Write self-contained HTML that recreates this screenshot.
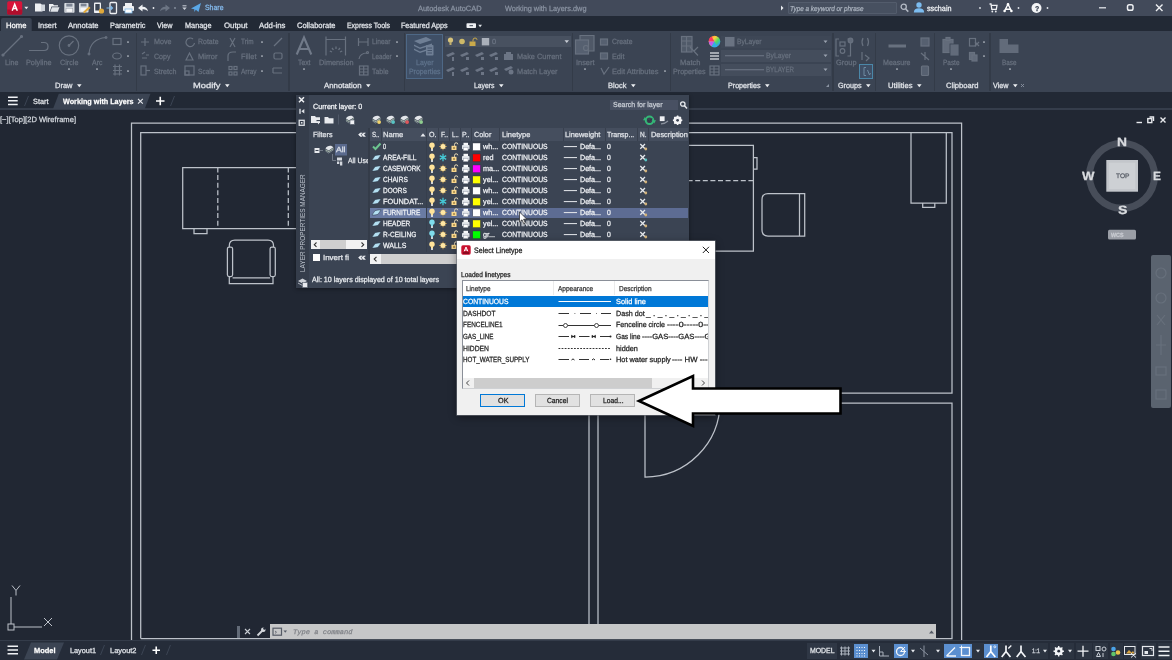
<!DOCTYPE html>
<html><head><meta charset="utf-8"><title>Autodesk AutoCAD - Working with Layers.dwg</title>
<style>
html,body{margin:0;padding:0;background:#212733;}
body{width:1172px;height:660px;position:relative;overflow:hidden;font-family:"Liberation Sans",sans-serif;}
#root{position:absolute;left:0;top:0;width:1172px;height:660px;overflow:hidden;background:#212733;filter:blur(0.5px);}
span{display:block}
svg.t{position:absolute;overflow:visible}
text{font-family:"Liberation Sans",sans-serif;text-rendering:geometricPrecision;white-space:pre}
</style></head><body><div id="root">
<svg style="position:absolute;left:0.0px;top:0.0px;" width="1172" height="660" viewBox="0 0 1172 660">
<g stroke="#bdc2ca" stroke-width="1.25" fill="none">
<path d="M131.5 640V123H961.6V640"/>
<path d="M140.7 638.6V132.7H952V393H600M600 403H952V638.6H140.7"/>
<path d="M589 287V638.6M598 287V638.6"/>
<path d="M645 402V477A75 75 0 0 0 720 402"/>
<!-- desk 1 -->
<path d="M300 167.5H182.7V228.5H300"/>
<path d="M217.8 167.5V228.5M288.3 167.5V228.5" stroke-dasharray="5 2.6"/>
<path d="M194 228.5V233.7H207V228.5"/>
<!-- chair 1 -->
<path d="M229.300 247V245.500Q229.300 240 234.800 240H268Q273.500 240 273.500 245.500V247"/>
<rect x="227.400" y="247" width="5.200" height="29.500" rx="1.800"/>
<rect x="270.100" y="247" width="5.200" height="29.500" rx="1.800"/>
<path d="M232.600 277.900H270.100M229.300 276.500V283.500H273V276.500"/>
<!-- desk 2 -->
<path d="M680 145.4H753.4V251H680"/>
<path d="M680 180.5H753.4" stroke-dasharray="5 2.6"/>
<path d="M753.4 157.5H757V169H753.4"/>
<!-- chair 2 -->
<path d="M804.7 193.5H768Q762 193.5 762 199.5V230Q762 236 768 236H804.7Z"/>
<path d="M799.5 193.5V236"/>
<!-- cabinet -->
<path d="M911 132.7V203H946.3V132.7"/>
<path d="M922.7 203V207.3H934.8V203"/>
</g></svg>
<svg style="position:absolute;left:0.0px;top:580.0px;" width="60" height="60" viewBox="0 0 60 60"><g stroke="#bdc2ca" stroke-width="1" fill="none"><path d="M11 17V44M14 47H42"/><rect x="8" y="44" width="6" height="6"/><path d="M12 5.5L16 10.5L20 5.5M16 10.5V15.5M44 38L52 46M52 38L44 46"/></g></svg>
<svg class="t" style="left:0.0px;top:122px;" width="1" height="1"><text x="0" y="0" font-size="7.6" fill="#d5d9df" textLength="76.0" lengthAdjust="spacingAndGlyphs" stroke="#d5d9df" stroke-width="0.25">[−][Top][2D Wireframe]</text></svg>
<svg style="position:absolute;left:1080.0px;top:132.0px;" width="90" height="115" viewBox="0 0 90 115">
<circle cx="42" cy="43.7" r="32.5" fill="none" stroke="#474d59" stroke-width="7"/>
<rect x="26.3" y="28" width="31.7" height="31.7" fill="#c3c6cb"/>
<rect x="29" y="30.7" width="26.3" height="26.3" fill="#cdd0d4"/>
<rect x="28" y="97.8" width="28" height="9.7" rx="1.5" fill="#9a9ea6"/>
</svg>
<svg class="t" style="left:1115.5px;top:178px;" width="1" height="1"><text x="0" y="0" font-size="6.5" fill="#5b606a" textLength="13.5" lengthAdjust="spacingAndGlyphs" stroke="#5b606a" stroke-width="0.25">TOP</text></svg>
<svg class="t" style="left:1117.0px;top:146px;" width="1" height="1"><text x="0" y="0" font-size="12" fill="#d9dbdf" font-weight="bold" textLength="10.0" lengthAdjust="spacingAndGlyphs" stroke="#d9dbdf" stroke-width="0.25">N</text></svg>
<svg class="t" style="left:1117.5px;top:214px;" width="1" height="1"><text x="0" y="0" font-size="12" fill="#d9dbdf" font-weight="bold" textLength="9.5" lengthAdjust="spacingAndGlyphs" stroke="#d9dbdf" stroke-width="0.25">S</text></svg>
<svg class="t" style="left:1081.5px;top:180px;" width="1" height="1"><text x="0" y="0" font-size="12" fill="#d9dbdf" font-weight="bold" textLength="12.5" lengthAdjust="spacingAndGlyphs" stroke="#d9dbdf" stroke-width="0.25">W</text></svg>
<svg class="t" style="left:1153.0px;top:180px;" width="1" height="1"><text x="0" y="0" font-size="12" fill="#d9dbdf" font-weight="bold" textLength="8.0" lengthAdjust="spacingAndGlyphs" stroke="#d9dbdf" stroke-width="0.25">E</text></svg>
<svg class="t" style="left:1110.5px;top:237px;" width="1" height="1"><text x="0" y="0" font-size="6" fill="#c8cbd1" font-weight="bold" textLength="12.5" lengthAdjust="spacingAndGlyphs" stroke="#c8cbd1" stroke-width="0.25">WCS</text></svg>
<svg style="position:absolute;left:1134.0px;top:114.0px;" width="36" height="12" viewBox="0 0 36 12"><g stroke="#e8eaee" stroke-width="1.4" fill="none"><path d="M2.5 8.5H8"/><rect x="13.8" y="4.6" width="4" height="4"/><path d="M15.5 3H19.5V7"/><path d="M26.5 3.5L31.5 8.5M31.5 3.5L26.5 8.5"/></g></svg>
<div style="position:absolute;left:1150.8px;top:255.0px;width:20.0px;height:153.0px;background:#5a636f;border-radius:2px;"></div>
<svg style="position:absolute;left:1151.0px;top:255.0px;" width="20" height="153" viewBox="0 0 20 153"><g stroke="#67707c" stroke-width="1.200" fill="none"><circle cx="10" cy="18" r="5"/><circle cx="10" cy="43" r="5"/><path d="M6 60L14 70M14 60L6 70M10 80V100M5 90H15"/><rect x="5" y="112" width="10" height="8"/><rect x="5" y="135" width="10" height="9"/></g></svg>
<div style="position:absolute;left:0.0px;top:0.0px;width:1172.0px;height:16.3px;background:#424a5a;"></div>
<div style="position:absolute;left:0.0px;top:16.3px;width:1172.0px;height:15.0px;background:#222935;"></div>
<div style="position:absolute;left:0.0px;top:31.0px;width:1172.0px;height:61.3px;background:#3b4453;"></div>
<div style="position:absolute;left:0.0px;top:92.3px;width:1172.0px;height:17.0px;background:#222935;"></div>
<div style="position:absolute;left:0.0px;top:108.3px;width:1172.0px;height:2.2px;background:#353d4b;"></div>
<svg style="position:absolute;left:5.0px;top:0.0px;" width="26" height="16" viewBox="0 0 26 16"><rect x="2.200" y="1.300" width="15" height="13.200" rx="1.600" fill="#d8143a"/><path d="M2.200 9.500H17.200V12.900Q17.200 14.500 15.600 14.500H3.800Q2.200 14.500 2.200 12.900Z" fill="#b00e2c"/><path d="M7.200 10.700L9.700 4.300L12.300 10.700M8.100 8.600H11.400" stroke="#fff" stroke-width="1.500" fill="none"/><path d="M19.300 6.700H23.300L21.300 9.300Z" fill="#e8eaee"/></svg>
<svg style="position:absolute;left:34.0px;top:0.0px;" width="170" height="16" viewBox="0 0 170 16"><g fill="#eef0f3">
<path d="M1 3.500H6.500L8.500 5.500V11.500H1Z"/><rect x="7" y="4.500" width="4" height="6.500" fill="#cfd4db"/>
<path d="M15 4H19L20 5.200H24V6.500H17.500L15.800 11.500H15Z"/><path d="M18 7.200H25.500L23.800 11.800H16.300Z" fill="#dfe3e8"/>
<rect x="30.300" y="3" width="10.200" height="9.800" rx=".8" fill="#d9dde2"/><rect x="32.300" y="3.600" width="6.200" height="3" fill="#7d8594"/><rect x="32" y="8.200" width="6.800" height="4" fill="#f4f5f7" stroke="#8a919d" stroke-width=".5"/>
<rect x="45" y="3" width="9.500" height="9.500" rx=".8" fill="#d9dde2"/><rect x="46.700" y="3.600" width="5.800" height="2.800" fill="#7d8594"/><rect x="46.500" y="8" width="6" height="3.500" fill="#f4f5f7"/><path d="M49 12L55 6.500L56.500 8L50.500 13.200Z" fill="#e0a93b"/>
<rect x="60" y="2.500" width="7" height="10.500" rx=".8"/><rect x="61.300" y="4" width="4.400" height="6.500" fill="#3b4453"/><circle cx="67.500" cy="11" r="2.600" fill="#e0a93b"/>
<rect x="76" y="2.500" width="6.500" height="11" rx="1" fill="none" stroke="#eef0f3" stroke-width="1.300"/><path d="M72.500 8H78M76.500 6L78.500 8L76.500 10" stroke="#7fb8e8" stroke-width="1.200" fill="none"/>
<rect x="89" y="6" width="11" height="5" rx="1"/><rect x="91" y="3" width="7" height="3.500"/><rect x="91" y="9" width="7" height="4" fill="#fff" stroke="#7fb8e8" stroke-width=".8"/>
<path d="M104 8L108.500 4.500V6.700Q113 6.500 114 11.200Q111.500 8.800 108.500 9.300V11.500Z"/>
<circle cx="119.500" cy="8" r=".9"/>
<path d="M136 8L131.500 4.500V6.700Q127 6.500 126 11.200Q128.500 8.800 131.500 9.300V11.500Z" fill="#6b7483"/>
<circle cx="141" cy="8" r=".9" fill="#8a93a1"/>
<path d="M148.300 7.500H152.700L150.500 10Z" fill="#c9ced6"/><rect x="148.500" y="5.300" width="4" height="1" fill="#c9ced6"/>
<path d="M157 8.500L167 3L164.500 12L161.800 9.800L160.300 12V9.300Z" fill="#5aa7e6"/>
</g></svg>
<svg class="t" style="left:205.0px;top:10px;" width="1" height="1"><text x="0" y="0" font-size="7.6" fill="#86bcef" textLength="18.5" lengthAdjust="spacingAndGlyphs" stroke="#86bcef" stroke-width="0.25">Share</text></svg>
<svg class="t" style="left:418.0px;top:11px;" width="1" height="1"><text x="0" y="0" font-size="7.6" fill="#8a93a2" textLength="63.5" lengthAdjust="spacingAndGlyphs" stroke="#8a93a2" stroke-width="0.25">Autodesk AutoCAD</text></svg>
<svg class="t" style="left:505.0px;top:11px;" width="1" height="1"><text x="0" y="0" font-size="7.6" fill="#8a93a2" textLength="81.5" lengthAdjust="spacingAndGlyphs" stroke="#8a93a2" stroke-width="0.25">Working with Layers.dwg</text></svg>
<svg style="position:absolute;left:778.0px;top:2.0px;" width="8" height="12" viewBox="0 0 8 12"><path d="M3 3.500L5.500 6L3 8.500Z" fill="#e8eaee"/></svg>
<div style="position:absolute;left:787.5px;top:1.5px;width:109.5px;height:12.8px;background:#475060;box-sizing:border-box;border:1px solid #535c6c;border-radius:1px;"></div>
<svg class="t" style="left:790.0px;top:11px;" width="1" height="1"><text x="0" y="0" font-size="7.2" fill="#a9b1bd" font-style="italic" textLength="73.5" lengthAdjust="spacingAndGlyphs" stroke="#a9b1bd" stroke-width="0.25">Type a keyword or phrase</text></svg>
<svg style="position:absolute;left:898.0px;top:0.0px;" width="274" height="16" viewBox="0 0 274 16"><circle cx="5.700" cy="6.800" r="2.600" fill="none" stroke="#b4bac5" stroke-width="1.300"/><path d="M7.700 9L10.300 11.600" stroke="#b4bac5" stroke-width="1.500"/>
<circle cx="21" cy="5" r="2.700" fill="#7cbcf0"/><path d="M15.800 12.500Q16 8.300 21 8.300Q26 8.300 26.200 12.500Z" fill="#7cbcf0"/>
<circle cx="82" cy="8" r=".9" fill="#dfe3e8"/>
<path d="M91.500 4H93L93.800 9.300H98.300L99 5.300H93.300" stroke="#eef0f3" stroke-width="1.300" fill="none"/><circle cx="94.300" cy="11.500" r=".9" fill="#eef0f3"/><circle cx="97.800" cy="11.500" r=".9" fill="#eef0f3"/>
<path d="M106.500 11L110 4.300L113.500 11M107.500 9.300H112.500" stroke="#fff" stroke-width="1.400" fill="none"/><circle cx="110" cy="4.400" r="1.300" fill="#fff"/><circle cx="106.600" cy="11" r="1.300" fill="#fff"/><circle cx="113.400" cy="11" r="1.300" fill="#fff"/>
<circle cx="120.500" cy="8" r=".9" fill="#dfe3e8"/>
<circle cx="138.500" cy="8" r="5" fill="#f4f5f7"/>
<circle cx="149.500" cy="8" r=".9" fill="#dfe3e8"/>
<path d="M201 7.800H208" stroke="#dfe3e8" stroke-width="1.300"/>
<rect x="229.500" y="4.800" width="5.500" height="5.500" rx="1.800" fill="none" stroke="#eef0f3" stroke-width="1.500"/>
<path d="M258 4.500L264.500 11M264.500 4.500L258 11" stroke="#eef0f3" stroke-width="1.400"/></svg>
<svg class="t" style="left:1035.2px;top:11px;" width="1" height="1"><text x="0" y="0" font-size="7" fill="#3b4453" font-weight="bold" stroke="#3b4453" stroke-width="0.25">?</text></svg>
<svg class="t" style="left:927.0px;top:11px;" width="1" height="1"><text x="0" y="0" font-size="7.8" fill="#f2f4f7" textLength="24.5" lengthAdjust="spacingAndGlyphs" stroke="#f2f4f7" stroke-width="0.25">sschain</text></svg>
<svg style="position:absolute;left:0.0px;top:16.0px;" width="40" height="16" viewBox="0 0 40 16"><path d="M1 15.300V3.800Q1 2 2.800 2H29.900Q31.700 2 31.700 3.800V15.300Z" fill="#3b4453"/></svg>
<svg class="t" style="left:6.0px;top:28px;" width="1" height="1"><text x="0" y="0" font-size="7.8" fill="#fff" textLength="20.5" lengthAdjust="spacingAndGlyphs" stroke="#fff" stroke-width="0.25">Home</text></svg>
<svg class="t" style="left:38.0px;top:28px;" width="1" height="1"><text x="0" y="0" font-size="7.8" fill="#e4e7ec" textLength="18.5" lengthAdjust="spacingAndGlyphs" stroke="#e4e7ec" stroke-width="0.25">Insert</text></svg>
<svg class="t" style="left:68.0px;top:28px;" width="1" height="1"><text x="0" y="0" font-size="7.8" fill="#e4e7ec" textLength="30.5" lengthAdjust="spacingAndGlyphs" stroke="#e4e7ec" stroke-width="0.25">Annotate</text></svg>
<svg class="t" style="left:110.0px;top:28px;" width="1" height="1"><text x="0" y="0" font-size="7.8" fill="#e4e7ec" textLength="35.5" lengthAdjust="spacingAndGlyphs" stroke="#e4e7ec" stroke-width="0.25">Parametric</text></svg>
<svg class="t" style="left:157.0px;top:28px;" width="1" height="1"><text x="0" y="0" font-size="7.8" fill="#e4e7ec" textLength="15.5" lengthAdjust="spacingAndGlyphs" stroke="#e4e7ec" stroke-width="0.25">View</text></svg>
<svg class="t" style="left:185.0px;top:28px;" width="1" height="1"><text x="0" y="0" font-size="7.8" fill="#e4e7ec" textLength="26.5" lengthAdjust="spacingAndGlyphs" stroke="#e4e7ec" stroke-width="0.25">Manage</text></svg>
<svg class="t" style="left:224.0px;top:28px;" width="1" height="1"><text x="0" y="0" font-size="7.8" fill="#e4e7ec" textLength="23.5" lengthAdjust="spacingAndGlyphs" stroke="#e4e7ec" stroke-width="0.25">Output</text></svg>
<svg class="t" style="left:259.0px;top:28px;" width="1" height="1"><text x="0" y="0" font-size="7.8" fill="#e4e7ec" textLength="26.5" lengthAdjust="spacingAndGlyphs" stroke="#e4e7ec" stroke-width="0.25">Add-ins</text></svg>
<svg class="t" style="left:297.0px;top:28px;" width="1" height="1"><text x="0" y="0" font-size="7.8" fill="#e4e7ec" textLength="38.5" lengthAdjust="spacingAndGlyphs" stroke="#e4e7ec" stroke-width="0.25">Collaborate</text></svg>
<svg class="t" style="left:346.5px;top:28px;" width="1" height="1"><text x="0" y="0" font-size="7.8" fill="#e4e7ec" textLength="43.0" lengthAdjust="spacingAndGlyphs" stroke="#e4e7ec" stroke-width="0.25">Express Tools</text></svg>
<svg class="t" style="left:401.0px;top:28px;" width="1" height="1"><text x="0" y="0" font-size="7.8" fill="#e4e7ec" textLength="46.5" lengthAdjust="spacingAndGlyphs" stroke="#e4e7ec" stroke-width="0.25">Featured Apps</text></svg>
<svg style="position:absolute;left:464.0px;top:19.0px;" width="24" height="12" viewBox="0 0 24 12"><rect x="2.500" y="4.300" width="9.500" height="4.800" rx=".8" fill="#eef0f3"/><path d="M5.500 6.700H9" stroke="#3b4453" stroke-width="1"/><path d="M14.300 5.800H18L16.150 8.200Z" fill="#dfe3e8"/></svg>
<div style="position:absolute;left:135.7px;top:33.0px;width:1.2px;height:57.5px;background:#333b48;"></div>
<div style="position:absolute;left:288.4px;top:33.0px;width:1.2px;height:57.5px;background:#333b48;"></div>
<div style="position:absolute;left:403.7px;top:33.0px;width:1.2px;height:57.5px;background:#333b48;"></div>
<div style="position:absolute;left:571.5px;top:33.0px;width:1.2px;height:57.5px;background:#333b48;"></div>
<div style="position:absolute;left:669.6px;top:33.0px;width:1.2px;height:57.5px;background:#333b48;"></div>
<div style="position:absolute;left:832.4px;top:33.0px;width:1.2px;height:57.5px;background:#333b48;"></div>
<div style="position:absolute;left:874.7px;top:33.0px;width:1.2px;height:57.5px;background:#333b48;"></div>
<div style="position:absolute;left:934.0px;top:33.0px;width:1.2px;height:57.5px;background:#333b48;"></div>
<div style="position:absolute;left:989.4px;top:33.0px;width:1.2px;height:57.5px;background:#333b48;"></div>
<svg class="t" style="left:55.0px;top:88px;" width="1" height="1"><text x="0" y="0" font-size="7.6" fill="#e4e7ec" textLength="17.5" lengthAdjust="spacingAndGlyphs" stroke="#e4e7ec" stroke-width="0.25">Draw</text></svg>
<svg style="position:absolute;left:75.8px;top:82.7px;" width="8" height="6" viewBox="0 0 8 6"><path d="M1 1.300H5.600L3.300 4.300Z" fill="#eef0f3"/></svg>
<svg class="t" style="left:193.0px;top:88px;" width="1" height="1"><text x="0" y="0" font-size="7.6" fill="#e4e7ec" textLength="27.5" lengthAdjust="spacingAndGlyphs" stroke="#e4e7ec" stroke-width="0.25">Modify</text></svg>
<svg style="position:absolute;left:223.8px;top:82.7px;" width="8" height="6" viewBox="0 0 8 6"><path d="M1 1.300H5.600L3.300 4.300Z" fill="#eef0f3"/></svg>
<svg class="t" style="left:324.0px;top:88px;" width="1" height="1"><text x="0" y="0" font-size="7.6" fill="#e4e7ec" textLength="37.5" lengthAdjust="spacingAndGlyphs" stroke="#e4e7ec" stroke-width="0.25">Annotation</text></svg>
<svg style="position:absolute;left:364.8px;top:82.7px;" width="8" height="6" viewBox="0 0 8 6"><path d="M1 1.300H5.600L3.300 4.300Z" fill="#eef0f3"/></svg>
<svg class="t" style="left:474.0px;top:88px;" width="1" height="1"><text x="0" y="0" font-size="7.6" fill="#e4e7ec" textLength="20.5" lengthAdjust="spacingAndGlyphs" stroke="#e4e7ec" stroke-width="0.25">Layers</text></svg>
<svg style="position:absolute;left:497.8px;top:82.7px;" width="8" height="6" viewBox="0 0 8 6"><path d="M1 1.300H5.600L3.300 4.300Z" fill="#eef0f3"/></svg>
<svg class="t" style="left:608.0px;top:88px;" width="1" height="1"><text x="0" y="0" font-size="7.6" fill="#e4e7ec" textLength="18.5" lengthAdjust="spacingAndGlyphs" stroke="#e4e7ec" stroke-width="0.25">Block</text></svg>
<svg style="position:absolute;left:629.8px;top:82.7px;" width="8" height="6" viewBox="0 0 8 6"><path d="M1 1.300H5.600L3.300 4.300Z" fill="#eef0f3"/></svg>
<svg class="t" style="left:728.0px;top:88px;" width="1" height="1"><text x="0" y="0" font-size="7.6" fill="#e4e7ec" textLength="32.5" lengthAdjust="spacingAndGlyphs" stroke="#e4e7ec" stroke-width="0.25">Properties</text></svg>
<svg style="position:absolute;left:763.8px;top:82.7px;" width="8" height="6" viewBox="0 0 8 6"><path d="M1 1.300H5.600L3.300 4.300Z" fill="#eef0f3"/></svg>
<svg class="t" style="left:838.0px;top:88px;" width="1" height="1"><text x="0" y="0" font-size="7.6" fill="#e4e7ec" textLength="23.5" lengthAdjust="spacingAndGlyphs" stroke="#e4e7ec" stroke-width="0.25">Groups</text></svg>
<svg style="position:absolute;left:864.8px;top:82.7px;" width="8" height="6" viewBox="0 0 8 6"><path d="M1 1.300H5.600L3.300 4.300Z" fill="#eef0f3"/></svg>
<svg class="t" style="left:888.0px;top:88px;" width="1" height="1"><text x="0" y="0" font-size="7.6" fill="#e4e7ec" textLength="24.5" lengthAdjust="spacingAndGlyphs" stroke="#e4e7ec" stroke-width="0.25">Utilities</text></svg>
<svg style="position:absolute;left:915.8px;top:82.7px;" width="8" height="6" viewBox="0 0 8 6"><path d="M1 1.300H5.600L3.300 4.300Z" fill="#eef0f3"/></svg>
<svg class="t" style="left:946.0px;top:88px;" width="1" height="1"><text x="0" y="0" font-size="7.6" fill="#e4e7ec" textLength="32.5" lengthAdjust="spacingAndGlyphs" stroke="#e4e7ec" stroke-width="0.25">Clipboard</text></svg>
<svg class="t" style="left:993.0px;top:88px;" width="1" height="1"><text x="0" y="0" font-size="7.6" fill="#e4e7ec" textLength="15.5" lengthAdjust="spacingAndGlyphs" stroke="#e4e7ec" stroke-width="0.25">View</text></svg>
<svg style="position:absolute;left:1011.8px;top:82.7px;" width="8" height="6" viewBox="0 0 8 6"><path d="M1 1.300H5.600L3.300 4.300Z" fill="#eef0f3"/></svg>
<svg style="position:absolute;left:1019.0px;top:82.0px;" width="8" height="7" viewBox="0 0 8 7"><path d="M2 2L5 5M5 2L2 5" stroke="#8a93a1" stroke-width=".9"/></svg>
<svg style="position:absolute;left:824.0px;top:82.0px;" width="8" height="7" viewBox="0 0 8 7"><path d="M5 2L2 5H5Z" fill="#8a93a1"/></svg>
<svg style="position:absolute;left:0.0px;top:0.0px;" width="1172" height="92" viewBox="0 0 1172 92"><g stroke="#68717f" stroke-width="1.200" fill="none"><path d="M3 55L21.500 36.500"/><circle cx="3" cy="55" r="1" fill="#626b7a"/><circle cx="21.500" cy="36.500" r="1" fill="#626b7a"/><path d="M29 50.500H44Q48 50.500 48 46.500Q48 42.500 44 42.500H41"/><circle cx="69" cy="45.500" r="9.700"/><path d="M69 45.500L73.500 41"/><circle cx="69" cy="45.500" r=".8"/><path d="M89 54Q90 39 106 37.500"/><circle cx="89" cy="54" r=".9"/><circle cx="106" cy="37.500" r=".9"/><rect x="113" y="38.500" width="8" height="6"/><ellipse cx="117" cy="56" rx="4.300" ry="3"/><path d="M113 66.500H122M113 70.500H122M113 74H122M115 64.500V75.500M119.500 64.500V75.500"/><path d="M145 38V46M141 42H149"/><path d="M142 54L145 52M142 58H147M146 55H149"/><rect x="141" y="66" width="5" height="9"/><path d="M146 70.500H150"/><path d="M193 39A4.300 4.300 0 1 0 194.500 43"/><path d="M186 60L189.500 53L193 60Z"/><rect x="185" y="66" width="9" height="9"/><rect x="185" y="71" width="4" height="4"/><path d="M230 38L235 47M235 38L230 47"/><path d="M228 61V56Q228 52 233 52H236"/><rect x="229" y="66.500" width="3" height="3"/><rect x="234" y="66.500" width="3" height="3"/><rect x="229" y="72" width="3" height="3"/><rect x="234" y="72" width="3" height="3"/><path d="M274 46L282 38"/><rect x="274" y="53" width="8" height="6" rx="1.500"/><path d="M273 68H282M273 73H282M273 68V73"/><path d="M296.700 54.500L304 37.500L311.300 54.500M299.500 49H308.500" stroke="#717a89" stroke-width="2.100"/><path d="M326 36.500V55.500M345.500 36.500V55.500M326 39.500H345.500"/><path d="M332 52L329.800 51M333.500 49.800L332 48M336 49V46.500M338.500 49.800L340 48M340 52L342.200 51" stroke-width="1.300"/><path d="M358.500 38V46M368 38V46M358.500 42H368"/><path d="M359 59Q360 53 367 53"/><circle cx="367.500" cy="52.500" r="1"/><rect x="359.500" y="66" width="8.500" height="9"/><path d="M359.500 69H368M359.500 72H368M363.700 66V75"/><path d="M580 40V35.500H594V51H588.500" fill="#4f5867"/><rect x="575.500" y="40" width="13" height="14" fill="#566070"/><circle cx="586" cy="48" r="2.500"/><rect x="600.500" y="39" width="7" height="6" fill="#566070"/><rect x="600.500" y="53" width="7" height="6" fill="#566070"/><path d="M601 68L604 74L609 67"/><rect x="681.500" y="36.500" width="10.500" height="15.500" fill="#505a69"/><path d="M681.500 41H692M681.500 46H692M686.500 36.500V52M690 47L698 55.500M698 47L694 51" /><path d="M710 53H719M710 56H719M710 59H719" stroke="#c3c8d0" stroke-width="1.400"/><rect x="710" y="66" width="9" height="9"/><path d="M710 69H719M710 72H719M714 66V75"/><path d="M839 39H836V56H839M847.500 39H850.500V56H847.500"/><rect x="840" y="42" width="5" height="4"/><circle cx="842.500" cy="51" r="2.300"/><circle cx="850.500" cy="40.500" r="2.300" fill="#626b7a"/><path d="M863 38Q861 42 863 46M867.500 38Q869.500 42 867.500 46"/><path d="M862 52V60M865 55L869 58L866 61"/><path d="M888.500 46H906" stroke-width="3"/><rect x="921" y="38" width="8" height="8" fill="#566070"/><path d="M921 53L929 60M925 52V60"/><rect x="921.500" y="66" width="7" height="9.500" rx="1" fill="#566070"/><rect x="943" y="39.500" width="10" height="13" fill="#626b7a"/><rect x="946" y="37.500" width="4" height="3" fill="#626b7a"/><rect x="950" y="44" width="9" height="12" fill="#626b7a" stroke="#3b4453" stroke-width=".8"/><rect x="969.500" y="38.500" width="6" height="7.500"/><path d="M975 42L979 46M979 42L975 46"/><rect x="969.500" y="52.500" width="5" height="7" fill="#626b7a"/><rect x="972" y="55" width="5" height="6" fill="#626b7a"/><path d="M999.500 39H1008V44.500H1018.500V53H999.500Z" fill="#626b7a" stroke="none"/></g></svg>
<svg style="position:absolute;left:126.0px;top:39.7px;" width="4" height="4" viewBox="0 0 4 4"><circle cx="2" cy="2" r=".85" fill="#c3c9d2"/></svg>
<svg style="position:absolute;left:126.0px;top:54.2px;" width="4" height="4" viewBox="0 0 4 4"><circle cx="2" cy="2" r=".85" fill="#c3c9d2"/></svg>
<svg style="position:absolute;left:126.0px;top:68.8px;" width="4" height="4" viewBox="0 0 4 4"><circle cx="2" cy="2" r=".85" fill="#c3c9d2"/></svg>
<svg style="position:absolute;left:67.0px;top:67.0px;" width="4" height="4" viewBox="0 0 4 4"><circle cx="2" cy="2" r=".85" fill="#c3c9d2"/></svg>
<svg style="position:absolute;left:95.0px;top:67.0px;" width="4" height="4" viewBox="0 0 4 4"><circle cx="2" cy="2" r=".85" fill="#c3c9d2"/></svg>
<svg style="position:absolute;left:260.0px;top:39.7px;" width="4" height="4" viewBox="0 0 4 4"><circle cx="2" cy="2" r=".85" fill="#c3c9d2"/></svg>
<svg style="position:absolute;left:260.0px;top:54.2px;" width="4" height="4" viewBox="0 0 4 4"><circle cx="2" cy="2" r=".85" fill="#c3c9d2"/></svg>
<svg style="position:absolute;left:260.0px;top:68.8px;" width="4" height="4" viewBox="0 0 4 4"><circle cx="2" cy="2" r=".85" fill="#c3c9d2"/></svg>
<svg style="position:absolute;left:302.0px;top:67.0px;" width="4" height="4" viewBox="0 0 4 4"><circle cx="2" cy="2" r=".85" fill="#c3c9d2"/></svg>
<svg style="position:absolute;left:395.0px;top:39.7px;" width="4" height="4" viewBox="0 0 4 4"><circle cx="2" cy="2" r=".85" fill="#c3c9d2"/></svg>
<svg style="position:absolute;left:395.0px;top:54.2px;" width="4" height="4" viewBox="0 0 4 4"><circle cx="2" cy="2" r=".85" fill="#c3c9d2"/></svg>
<svg style="position:absolute;left:583.0px;top:67.0px;" width="4" height="4" viewBox="0 0 4 4"><circle cx="2" cy="2" r=".85" fill="#c3c9d2"/></svg>
<svg style="position:absolute;left:663.0px;top:68.8px;" width="4" height="4" viewBox="0 0 4 4"><circle cx="2" cy="2" r=".85" fill="#c3c9d2"/></svg>
<svg style="position:absolute;left:895.0px;top:67.0px;" width="4" height="4" viewBox="0 0 4 4"><circle cx="2" cy="2" r=".85" fill="#c3c9d2"/></svg>
<svg style="position:absolute;left:949.0px;top:67.0px;" width="4" height="4" viewBox="0 0 4 4"><circle cx="2" cy="2" r=".85" fill="#c3c9d2"/></svg>
<svg style="position:absolute;left:982.0px;top:39.7px;" width="4" height="4" viewBox="0 0 4 4"><circle cx="2" cy="2" r=".85" fill="#c3c9d2"/></svg>
<svg style="position:absolute;left:982.0px;top:54.2px;" width="4" height="4" viewBox="0 0 4 4"><circle cx="2" cy="2" r=".85" fill="#c3c9d2"/></svg>
<svg style="position:absolute;left:1008.0px;top:67.0px;" width="4" height="4" viewBox="0 0 4 4"><circle cx="2" cy="2" r=".85" fill="#c3c9d2"/></svg>
<svg class="t" style="left:5.0px;top:65px;" width="1" height="1"><text x="0" y="0" font-size="7.6" fill="#68717f" textLength="13.5" lengthAdjust="spacingAndGlyphs" stroke="#68717f" stroke-width="0.25">Line</text></svg>
<svg class="t" style="left:26.0px;top:65px;" width="1" height="1"><text x="0" y="0" font-size="7.6" fill="#68717f" textLength="25.5" lengthAdjust="spacingAndGlyphs" stroke="#68717f" stroke-width="0.25">Polyline</text></svg>
<svg class="t" style="left:60.0px;top:65px;" width="1" height="1"><text x="0" y="0" font-size="7.6" fill="#68717f" textLength="18.5" lengthAdjust="spacingAndGlyphs" stroke="#68717f" stroke-width="0.25">Circle</text></svg>
<svg class="t" style="left:92.0px;top:65px;" width="1" height="1"><text x="0" y="0" font-size="7.6" fill="#68717f" textLength="10.5" lengthAdjust="spacingAndGlyphs" stroke="#68717f" stroke-width="0.25">Arc</text></svg>
<svg class="t" style="left:154.0px;top:44px;" width="1" height="1"><text x="0" y="0" font-size="7.6" fill="#68717f" textLength="17.5" lengthAdjust="spacingAndGlyphs" stroke="#68717f" stroke-width="0.25">Move</text></svg>
<svg class="t" style="left:154.0px;top:59px;" width="1" height="1"><text x="0" y="0" font-size="7.6" fill="#68717f" textLength="16.5" lengthAdjust="spacingAndGlyphs" stroke="#68717f" stroke-width="0.25">Copy</text></svg>
<svg class="t" style="left:154.0px;top:74px;" width="1" height="1"><text x="0" y="0" font-size="7.6" fill="#68717f" textLength="22.5" lengthAdjust="spacingAndGlyphs" stroke="#68717f" stroke-width="0.25">Stretch</text></svg>
<svg class="t" style="left:198.0px;top:44px;" width="1" height="1"><text x="0" y="0" font-size="7.6" fill="#68717f" textLength="20.5" lengthAdjust="spacingAndGlyphs" stroke="#68717f" stroke-width="0.25">Rotate</text></svg>
<svg class="t" style="left:198.0px;top:59px;" width="1" height="1"><text x="0" y="0" font-size="7.6" fill="#68717f" textLength="19.5" lengthAdjust="spacingAndGlyphs" stroke="#68717f" stroke-width="0.25">Mirror</text></svg>
<svg class="t" style="left:198.0px;top:74px;" width="1" height="1"><text x="0" y="0" font-size="7.6" fill="#68717f" textLength="16.5" lengthAdjust="spacingAndGlyphs" stroke="#68717f" stroke-width="0.25">Scale</text></svg>
<svg class="t" style="left:241.0px;top:44px;" width="1" height="1"><text x="0" y="0" font-size="7.6" fill="#68717f" textLength="12.5" lengthAdjust="spacingAndGlyphs" stroke="#68717f" stroke-width="0.25">Trim</text></svg>
<svg class="t" style="left:241.0px;top:59px;" width="1" height="1"><text x="0" y="0" font-size="7.6" fill="#68717f" textLength="15.5" lengthAdjust="spacingAndGlyphs" stroke="#68717f" stroke-width="0.25">Fillet</text></svg>
<svg class="t" style="left:241.0px;top:74px;" width="1" height="1"><text x="0" y="0" font-size="7.6" fill="#68717f" textLength="15.5" lengthAdjust="spacingAndGlyphs" stroke="#68717f" stroke-width="0.25">Array</text></svg>
<svg class="t" style="left:298.0px;top:65px;" width="1" height="1"><text x="0" y="0" font-size="7.6" fill="#68717f" textLength="12.5" lengthAdjust="spacingAndGlyphs" stroke="#68717f" stroke-width="0.25">Text</text></svg>
<svg class="t" style="left:319.0px;top:65px;" width="1" height="1"><text x="0" y="0" font-size="7.6" fill="#68717f" textLength="34.5" lengthAdjust="spacingAndGlyphs" stroke="#68717f" stroke-width="0.25">Dimension</text></svg>
<svg class="t" style="left:372.0px;top:44px;" width="1" height="1"><text x="0" y="0" font-size="7.6" fill="#68717f" textLength="18.5" lengthAdjust="spacingAndGlyphs" stroke="#68717f" stroke-width="0.25">Linear</text></svg>
<svg class="t" style="left:372.0px;top:59px;" width="1" height="1"><text x="0" y="0" font-size="7.6" fill="#68717f" textLength="19.5" lengthAdjust="spacingAndGlyphs" stroke="#68717f" stroke-width="0.25">Leader</text></svg>
<svg class="t" style="left:372.0px;top:74px;" width="1" height="1"><text x="0" y="0" font-size="7.6" fill="#68717f" textLength="16.5" lengthAdjust="spacingAndGlyphs" stroke="#68717f" stroke-width="0.25">Table</text></svg>
<div style="position:absolute;left:406.0px;top:34.0px;width:36.5px;height:44.5px;background:#3f4f66;box-sizing:border-box;border:1px solid #4e6886;"></div>
<svg style="position:absolute;left:406.0px;top:34.0px;" width="37" height="45" viewBox="0 0 37 45"><g fill="#6f7f95"><path d="M8 7L20 3L26 6L14 10Z"/><path d="M8 10.500L14 13.500L26 9.500V11L14 15L8 12Z"/><path d="M8 14.500L14 17.500L20 15.500V17L14 19L8 16Z"/><rect x="20" y="11" width="7.500" height="10.500" rx=".8"/></g><path d="M21.500 14H26M21.500 16.500H26M21.500 19H26" stroke="#3f4f66" stroke-width=".9"/></svg>
<svg class="t" style="left:415.5px;top:65px;" width="1" height="1"><text x="0" y="0" font-size="7.6" fill="#5f738c" textLength="17.5" lengthAdjust="spacingAndGlyphs" stroke="#5f738c" stroke-width="0.25">Layer</text></svg>
<svg class="t" style="left:408.5px;top:74px;" width="1" height="1"><text x="0" y="0" font-size="7.6" fill="#5f738c" textLength="31.5" lengthAdjust="spacingAndGlyphs" stroke="#5f738c" stroke-width="0.25">Properties</text></svg>
<div style="position:absolute;left:445.0px;top:36.0px;width:125.5px;height:11.3px;background:#485160;"></div>
<svg style="position:absolute;left:445.0px;top:35.0px;" width="130" height="46" viewBox="0 0 130 46"><circle cx="5.500" cy="5" r="2.600" fill="#d6c27a"/><rect x="4.500" y="7" width="2" height="3" fill="#bfae6f"/>
<circle cx="17" cy="6.500" r="2.800" fill="#cdb968"/>
<rect x="24.500" y="6.500" width="6" height="4.500" fill="#c9a94a"/><path d="M28 6.500V5Q28 3 30 3Q32 3 32 4.800" stroke="#c9a94a" stroke-width="1" fill="none"/>
<rect x="36.800" y="3" width="7.400" height="7.400" fill="#aab0ba"/>
<path d="M119.500 5.300H124L121.750 8Z" fill="#c9ced6"/>
<g fill="#6c7585"><path d="M1 20L8 17L10 19L3 22Z"/><path d="M15 20L22 17L24 19L17 22Z"/><path d="M30 20L37 17L39 19L32 22Z"/><path d="M44 20L51 17L53 19L46 22Z"/><path d="M1 35L8 32L10 34L3 37Z"/><path d="M15 35L22 32L24 34L17 37Z"/><path d="M30 35L37 32L39 34L32 37Z"/><path d="M44 35L51 32L53 34L46 37Z"/>
<rect x="7" y="22" width="2" height="4"/><rect x="21" y="22" width="3" height="3"/><rect x="36" y="22" width="3" height="3"/><rect x="50" y="22" width="3" height="3"/><rect x="7" y="37" width="2" height="4"/><rect x="21" y="37" width="3" height="3"/><rect x="36" y="37" width="3" height="3"/><rect x="50" y="37" width="3" height="3"/>
<path d="M59 19H68V25H59Z M61 17H66V19H61Z"/><path d="M59 34L66 31L68 33L61 36Z"/><circle cx="66" cy="37" r="2.500"/></g></svg>
<svg class="t" style="left:492.0px;top:44px;" width="1" height="1"><text x="0" y="0" font-size="7.4" fill="#6b7483" stroke="#6b7483" stroke-width="0.25">0</text></svg>
<svg class="t" style="left:517.0px;top:59px;" width="1" height="1"><text x="0" y="0" font-size="7.6" fill="#68717f" textLength="44.5" lengthAdjust="spacingAndGlyphs" stroke="#68717f" stroke-width="0.25">Make Current</text></svg>
<svg class="t" style="left:517.0px;top:74px;" width="1" height="1"><text x="0" y="0" font-size="7.6" fill="#68717f" textLength="40.5" lengthAdjust="spacingAndGlyphs" stroke="#68717f" stroke-width="0.25">Match Layer</text></svg>
<svg class="t" style="left:576.0px;top:65px;" width="1" height="1"><text x="0" y="0" font-size="7.6" fill="#68717f" textLength="18.5" lengthAdjust="spacingAndGlyphs" stroke="#68717f" stroke-width="0.25">Insert</text></svg>
<svg class="t" style="left:612.0px;top:44px;" width="1" height="1"><text x="0" y="0" font-size="7.6" fill="#68717f" textLength="20.5" lengthAdjust="spacingAndGlyphs" stroke="#68717f" stroke-width="0.25">Create</text></svg>
<svg class="t" style="left:612.0px;top:59px;" width="1" height="1"><text x="0" y="0" font-size="7.6" fill="#68717f" textLength="12.5" lengthAdjust="spacingAndGlyphs" stroke="#68717f" stroke-width="0.25">Edit</text></svg>
<svg class="t" style="left:612.0px;top:74px;" width="1" height="1"><text x="0" y="0" font-size="7.6" fill="#68717f" textLength="46.5" lengthAdjust="spacingAndGlyphs" stroke="#68717f" stroke-width="0.25">Edit Attributes</text></svg>
<svg class="t" style="left:680.0px;top:65px;" width="1" height="1"><text x="0" y="0" font-size="7.6" fill="#68717f" textLength="20.5" lengthAdjust="spacingAndGlyphs" stroke="#68717f" stroke-width="0.25">Match</text></svg>
<svg class="t" style="left:673.0px;top:74px;" width="1" height="1"><text x="0" y="0" font-size="7.6" fill="#68717f" textLength="32.5" lengthAdjust="spacingAndGlyphs" stroke="#68717f" stroke-width="0.25">Properties</text></svg>
<div style="position:absolute;left:721.0px;top:36.0px;width:110.0px;height:11.5px;background:#3e4756;"></div>
<div style="position:absolute;left:721.0px;top:50.0px;width:110.0px;height:11.5px;background:#444d5c;"></div>
<div style="position:absolute;left:721.0px;top:64.0px;width:110.0px;height:11.5px;background:#444d5c;"></div>
<svg style="position:absolute;left:706.0px;top:34.0px;" width="128" height="44" viewBox="0 0 128 44"><defs><linearGradient id="cw1" x1="0" y1="0" x2="1" y2="1"><stop offset="0" stop-color="#ff5a3c"/><stop offset=".35" stop-color="#ffd23c"/><stop offset=".6" stop-color="#4cd964"/><stop offset=".8" stop-color="#34aadc"/><stop offset="1" stop-color="#af52de"/></linearGradient></defs>
<circle cx="8.500" cy="7.500" r="5.800" fill="url(#cw1)"/><path d="M8.500 7.500L2.700 7.500A5.800 5.800 0 0 1 5.600 2.500Z" fill="#ff375f"/><path d="M8.500 7.500L5.600 12.500A5.800 5.800 0 0 1 2.700 7.500Z" fill="#bf5af2"/><path d="M8.500 7.500L11.400 12.500A5.800 5.800 0 0 1 5.600 12.500Z" fill="#32ade6"/>
<rect x="19" y="3" width="9.500" height="9.500" fill="#6a7382"/>
<path d="M19 21.800H58M19 35.800H58" stroke="#6f7887" stroke-width="1.100"/>
<path d="M117.500 6.500H121.500L119.500 9Z M117.500 20.500H121.500L119.500 23Z M117.500 34.500H121.500L119.500 37Z" fill="#9aa2af"/></svg>
<svg class="t" style="left:737.0px;top:44px;" width="1" height="1"><text x="0" y="0" font-size="7.6" fill="#68717f" textLength="24.5" lengthAdjust="spacingAndGlyphs" stroke="#68717f" stroke-width="0.25">ByLayer</text></svg>
<svg class="t" style="left:766.0px;top:58px;" width="1" height="1"><text x="0" y="0" font-size="7.6" fill="#68717f" textLength="25.0" lengthAdjust="spacingAndGlyphs" stroke="#68717f" stroke-width="0.25">ByLayer</text></svg>
<svg class="t" style="left:766.0px;top:72px;" width="1" height="1"><text x="0" y="0" font-size="7.6" fill="#68717f" textLength="28.0" lengthAdjust="spacingAndGlyphs" stroke="#68717f" stroke-width="0.25">BYLAYER</text></svg>
<svg class="t" style="left:836.0px;top:65px;" width="1" height="1"><text x="0" y="0" font-size="7.6" fill="#68717f" textLength="20.5" lengthAdjust="spacingAndGlyphs" stroke="#68717f" stroke-width="0.25">Group</text></svg>
<div style="position:absolute;left:858.5px;top:64.0px;width:14.5px;height:14.5px;background:#3f4f66;box-sizing:border-box;border:1px solid #4b87a8;"></div>
<svg style="position:absolute;left:858.5px;top:64.0px;" width="15" height="15" viewBox="0 0 15 15"><path d="M5 3.500V11.500M5 3.500H7M5 11.500H7M8.500 6L10.500 11L11.500 9" stroke="#6f8aa0" stroke-width="1" fill="none"/></svg>
<svg class="t" style="left:883.0px;top:65px;" width="1" height="1"><text x="0" y="0" font-size="7.6" fill="#68717f" textLength="27.5" lengthAdjust="spacingAndGlyphs" stroke="#68717f" stroke-width="0.25">Measure</text></svg>
<svg class="t" style="left:943.0px;top:65px;" width="1" height="1"><text x="0" y="0" font-size="7.6" fill="#68717f" textLength="16.5" lengthAdjust="spacingAndGlyphs" stroke="#68717f" stroke-width="0.25">Paste</text></svg>
<svg class="t" style="left:1002.0px;top:65px;" width="1" height="1"><text x="0" y="0" font-size="7.6" fill="#68717f" textLength="14.5" lengthAdjust="spacingAndGlyphs" stroke="#68717f" stroke-width="0.25">Base</text></svg>
<svg style="position:absolute;left:0.0px;top:93.0px;" width="180" height="16" viewBox="0 0 180 16">
<path d="M53 16L58.800 0.800H150.500L144.700 16Z" fill="#3b4453"/>
<g stroke="#f0f2f5" stroke-width="1.5"><path d="M8 4.200H17.700M8 7.800H17.700M8 11.400H17.700"/></g>
<path d="M24.5 13L28.5 3M170.5 13L174.500 3" stroke="#3b4453" stroke-width="1"/>
<path d="M138 5.800L142.800 10.600M142.800 5.800L138 10.600" stroke="#e8eaee" stroke-width="1.100"/>
<path d="M156 8H164.5M160.25 3.700V12.3" stroke="#fff" stroke-width="1.6"/>
</svg>
<svg class="t" style="left:33.0px;top:104px;" width="1" height="1"><text x="0" y="0" font-size="7.6" fill="#e3e6ea" textLength="15.5" lengthAdjust="spacingAndGlyphs" stroke="#e3e6ea" stroke-width="0.25">Start</text></svg>
<svg class="t" style="left:62.5px;top:104px;" width="1" height="1"><text x="0" y="0" font-size="7.6" fill="#fff" font-weight="bold" textLength="70.5" lengthAdjust="spacingAndGlyphs" stroke="#fff" stroke-width="0.25">Working with Layers</text></svg>
<div style="position:absolute;left:270.0px;top:624.4px;width:666.0px;height:14.2px;background:#c6c7c8;"></div>
<div style="position:absolute;left:236.8px;top:626.0px;width:3.5px;height:11.5px;background:#636b78;"></div>
<svg style="position:absolute;left:240.0px;top:624.0px;" width="50" height="15" viewBox="0 0 50 15"><path d="M5 5L10 10M10 5L5 10" stroke="#c9cdd3" stroke-width="1.1"/>
<path d="M17.500 11.500L22.500 6.500" stroke="#d4d7dc" stroke-width="1.8"/><circle cx="23.300" cy="5.700" r="2.300" fill="#d4d7dc"/><circle cx="24.500" cy="4.500" r="1.300" fill="#212733"/>
<rect x="33" y="4.200" width="8.500" height="7" fill="none" stroke="#555b66" stroke-width="1.2"/><path d="M35 7L36.500 8.200L35 9.400" stroke="#555b66" fill="none" stroke-width=".8"/><path d="M43.500 6.500H47L45.250 8.800Z" fill="#555b66"/></svg>
<svg class="t" style="left:292.5px;top:634px;" width="1" height="1"><text x="0" y="0" font-size="6.8" fill="#808388" font-style="italic" style="font-family:'Liberation Mono',monospace" textLength="59.5" lengthAdjust="spacingAndGlyphs" stroke="#808388" stroke-width="0.25">Type a command</text></svg>
<svg style="position:absolute;left:925.0px;top:625.0px;" width="12" height="12" viewBox="0 0 12 12"><path d="M4 8.500H9L6.500 5.500Z" fill="#555b66"/></svg>
<div style="position:absolute;left:0.0px;top:640.3px;width:1172.0px;height:19.7px;background:#252c39;"></div>
<div style="position:absolute;left:0.0px;top:640.3px;width:1172.0px;height:0.9px;background:#343c4a;"></div>
<div style="position:absolute;left:840.0px;top:642.5px;width:165.0px;height:16.0px;background:#2c3441;"></div>
<div style="position:absolute;left:1008.0px;top:642.5px;width:40.0px;height:16.0px;background:#2c3441;"></div>
<div style="position:absolute;left:1050.0px;top:642.5px;width:24.0px;height:16.0px;background:#2c3441;"></div>
<div style="position:absolute;left:1075.5px;top:642.5px;width:16.0px;height:16.0px;background:#2c3441;"></div>
<div style="position:absolute;left:1093.0px;top:642.5px;width:15.0px;height:16.0px;background:#2c3441;"></div>
<div style="position:absolute;left:1109.5px;top:642.5px;width:13.0px;height:16.0px;background:#2c3441;"></div>
<div style="position:absolute;left:1124.0px;top:642.5px;width:13.0px;height:16.0px;background:#2c3441;"></div>
<div style="position:absolute;left:1140.5px;top:642.5px;width:15.0px;height:16.0px;background:#2c3441;"></div>
<div style="position:absolute;left:1157.5px;top:642.5px;width:14.5px;height:16.0px;background:#2c3441;"></div>
<svg style="position:absolute;left:0.0px;top:640.4px;" width="180" height="19.6" viewBox="0 0 180 19.6">
<path d="M24 19.600L31 2.500H64L57 19.600Z" fill="#3b4453"/>
<g stroke="#f0f2f5" stroke-width="1.500"><path d="M7.500 6.300H18M7.500 10H18M7.500 13.700H18"/></g>
<path d="M100.500 15L104.500 5M141.500 15L145.500 5M166.500 15L170.500 5" stroke="#3b4453" stroke-width="1"/>
<path d="M152.500 10.200H160M156.250 6.400V14" stroke="#fff" stroke-width="1.600"/>
</svg>
<svg class="t" style="left:33.5px;top:653px;" width="1" height="1"><text x="0" y="0" font-size="7.4" fill="#fff" font-weight="bold" textLength="21.5" lengthAdjust="spacingAndGlyphs" stroke="#fff" stroke-width="0.25">Model</text></svg>
<svg class="t" style="left:69.5px;top:653px;" width="1" height="1"><text x="0" y="0" font-size="7.4" fill="#e1e4e9" textLength="26.0" lengthAdjust="spacingAndGlyphs" stroke="#e1e4e9" stroke-width="0.25">Layout1</text></svg>
<svg class="t" style="left:109.5px;top:653px;" width="1" height="1"><text x="0" y="0" font-size="7.4" fill="#e1e4e9" textLength="26.5" lengthAdjust="spacingAndGlyphs" stroke="#e1e4e9" stroke-width="0.25">Layout2</text></svg>
<div style="position:absolute;left:806.5px;top:642.5px;width:30.0px;height:16.0px;background:#2f3745;"></div>
<svg class="t" style="left:809.5px;top:653px;" width="1" height="1"><text x="0" y="0" font-size="7.3" fill="#e6e9ed" textLength="24.5" lengthAdjust="spacingAndGlyphs" stroke="#e6e9ed" stroke-width="0.25">MODEL</text></svg>
<div style="position:absolute;left:854.0px;top:643.5px;width:13.5px;height:14.5px;background:#5b8fd0;"></div>
<div style="position:absolute;left:894.0px;top:643.5px;width:13.5px;height:14.5px;background:#5b8fd0;"></div>
<div style="position:absolute;left:944.0px;top:643.5px;width:13.5px;height:14.5px;background:#5b8fd0;"></div>
<div style="position:absolute;left:958.3px;top:643.5px;width:13.5px;height:14.5px;background:#5b8fd0;"></div>
<div style="position:absolute;left:984.0px;top:643.5px;width:13.5px;height:14.5px;background:#5b8fd0;"></div>
<svg style="position:absolute;left:800.0px;top:640.0px;" width="372" height="20" viewBox="0 0 372 20"><g stroke="#e6e9ed" stroke-width="1" fill="none">
<path d="M41.500 6.500V15.500M45 6.500V15.500M48.500 6.500V15.500M40 8H50M40 11H50M40 14H50" stroke="#aab1bc"/>
<g stroke="#f4f6f9" stroke-dasharray="1 1.500"><path d="M56.500 7.500H65.500M56.500 10.500H65.500M56.500 13.500H65.500M56.500 16H65.500"/></g>
<path d="M79.500 6V16H89M79.500 12H83V16" stroke="#aab1bc"/>
<circle cx="100.500" cy="11.500" r="4" stroke="#f4f6f9" stroke-width="1.300"/><path d="M100.500 11.500L105 7M100.500 11.500H106" stroke="#f4f6f9"/>
<path d="M124 5.500V17M120 8L128 15" stroke="#8a92a0"/>
<path d="M146.500 16H156M146.500 16L155 7.500" stroke="#f4f6f9" stroke-width="1.300"/>
<rect x="161.500" y="7.500" width="8" height="8" stroke="#f4f6f9" stroke-width="1.300"/><path d="M159.500 7.500H163M161.500 5.500V9" stroke="#f4f6f9"/>
<path d="M190.800 5.500V11.500L186.500 17M190.800 11.500L195.300 17" stroke="#fff" stroke-width="1.700"/><circle cx="194.800" cy="6.800" r="1" stroke="#fff" stroke-width=".7"/>
<path d="M206 5.500V11.500L201.700 17M206 11.500L210.500 17" stroke="#f4f6f9" stroke-width="1.700"/><path d="M208.300 8.500L211.300 5.500" stroke="#f4f6f9" stroke-width="1.200"/>
<path d="M221 5.500V11.500L216.700 17M221 11.500L225.500 17" stroke="#f4f6f9" stroke-width="1.700"/>
<circle cx="258.700" cy="11.200" r="3" stroke="#f4f6f9" stroke-width="2"/><path d="M258.700 6V16.400M253.500 11.200H263.900M255 7.500L262.400 14.900M262.400 7.500L255 14.900" stroke="#f4f6f9" stroke-width="1.400"/>
<path d="M277.500 11.200H288.500M283 5.700V16.700" stroke="#f4f6f9" stroke-width="1.300"/>
<rect x="296" y="6.500" width="4" height="4" stroke="#c9ced6"/><circle cx="304" cy="9" r="2" stroke="#c9ced6"/><path d="M296.500 16.500L298.500 12.500L300.500 16.500Z" stroke="#c9ced6"/><path d="M303 13V17" stroke="#c9ced6"/>
<rect x="324.500" y="6.500" width="10.500" height="8" stroke="#e6e9ed"/>
<rect x="342.500" y="6.500" width="11" height="9" stroke="#e6e9ed" stroke-width="1.200"/>
<path d="M358.500 7H369.500M358.500 11.200H369.500M358.500 15.400H369.500" stroke="#f0f2f5" stroke-width="1.500"/>
</g>
<circle cx="258.700" cy="11.200" r="1.400" fill="#252c39"/>
<g fill="#e6e9ed"><path d="M71.500 9.800H75.500L73.500 12.400Z M111 9.800H115L113 12.400Z M136 9.800H140L138 12.400Z M176 9.800H180L178 12.400Z M243 9.800H247L245 12.400Z M268 9.800H272L270 12.400Z"/></g>
<circle cx="313.500" cy="9" r="2.300" fill="#4aa3e8"/><circle cx="318" cy="12.500" r="2.300" fill="#e8c34a"/><circle cx="313.500" cy="14" r="2.300" fill="#5fc46b"/>
<path d="M326 13.500L329 10L331.500 12.500L333 11L334.500 13.500Z" fill="#d9a441"/><path d="M331 13L336 17.500M336 13L331 17.500" stroke="#e6e9ed" stroke-width="1"/>
<rect x="344.500" y="11" width="3.500" height="3" fill="#e6e9ed"/><path d="M349.500 8.500H352V11" stroke="#e6e9ed" fill="none" stroke-width=".9"/></svg>
<svg class="t" style="left:1031.5px;top:653px;" width="1" height="1"><text x="0" y="0" font-size="6.4" fill="#cfd3da" textLength="8.0" lengthAdjust="spacingAndGlyphs" stroke="#cfd3da" stroke-width="0.25">1:1</text></svg>
<div style="position:absolute;left:295.5px;top:94.8px;width:393.3px;height:193.2px;background:#3b4453;box-shadow:0 1px 4px rgba(0,0,0,.4);"></div>
<div style="position:absolute;left:295.5px;top:94.8px;width:13.0px;height:193.2px;background:#353d4b;"></div>
<svg style="position:absolute;left:296.0px;top:94.0px;" width="13" height="35" viewBox="0 0 13 35"><g stroke="#eef0f3" stroke-width="1.500" fill="none"><path d="M3 3.300L8 8.300M8 3.300L3 8.300"/></g><g fill="#dfe2e7"><rect x="3.300" y="14.800" width="1.400" height="5"/><path d="M8.300 15V19.600L5.300 17.300Z"/><rect x="3.200" y="26.300" width="5" height="5" fill="none" stroke="#dfe2e7" stroke-width="1.300"/><rect x="4.900" y="28" width="1.600" height="1.600"/></g></svg>
<span style="position:absolute;left:296.5px;top:271.7px;font-size:6.9px;line-height:11px;color:#bcc2cc;white-space:pre;transform-origin:0 0;transform:rotate(-90deg) scaleX(0.93);">LAYER PROPERTIES MANAGER</span>
<svg style="position:absolute;left:296.0px;top:276.0px;" width="13" height="13" viewBox="0 0 13 13"><path d="M2 5L6.500 2.500L11 5L6.500 7.500Z" fill="#cfd3d9"/><path d="M2 7L6.500 9.500L11 7" stroke="#aeb4bf" fill="none"/><rect x="6.500" y="6.500" width="5" height="5" fill="#e8eaee" stroke="#59616e" stroke-width=".6"/></svg>
<svg class="t" style="left:312.8px;top:109px;" width="1" height="1"><text x="0" y="0" font-size="7.5" fill="#f2f4f7" textLength="49.2" lengthAdjust="spacingAndGlyphs" stroke="#f2f4f7" stroke-width="0.25">Current layer: 0</text></svg>
<div style="position:absolute;left:610.0px;top:99.8px;width:67.5px;height:10.0px;background:#485062;"></div>
<svg class="t" style="left:612.5px;top:107px;" width="1" height="1"><text x="0" y="0" font-size="7.3" fill="#c9ced6" textLength="49.5" lengthAdjust="spacingAndGlyphs" stroke="#c9ced6" stroke-width="0.25">Search for layer</text></svg>
<svg style="position:absolute;left:678.0px;top:98.5px;" width="12" height="12" viewBox="0 0 12 12"><circle cx="4.800" cy="5" r="2.200" fill="none" stroke="#e6e9ed" stroke-width="1.300"/><path d="M6.500 6.800L9 9.400" stroke="#e6e9ed" stroke-width="1.500"/></svg>
<svg style="position:absolute;left:308.8px;top:113.0px;" width="130" height="13" viewBox="0 0 130 13"><g fill="#e8eaee"><path d="M2 3H6L7 4.200H11V10H2Z"/><path d="M15.500 4H19L20 5.200H24.500V10.500H15.500Z"/></g><rect x="7.500" y="7" width="4" height="1.200" fill="#3b4453"/><path d="M8 8.500H11L9.500 11.500Z" fill="#e8eaee"/><path d="M29.500 1.500V11.500" stroke="#505969" stroke-width="1"/><g transform="translate(36.2,1.5) scale(0.8)"><path d="M1 5Q3 1 8 1.500L11 3.500L5 7.500Z" fill="#e3e6ea"/><path d="M1 6.500L5 9L11 5" stroke="#9fb0a6" fill="none" stroke-width="1.300"/><path d="M1 8.200L5 10.700L11 6.700" stroke="#7f8b90" fill="none" stroke-width="1.200"/></g><rect x="41" y="7" width="4.500" height="4.500" fill="#f0f2f5" stroke="#4a5261" stroke-width=".6"/><g transform="translate(62.7,1.5) scale(0.8)"><path d="M1 5Q3 1 8 1.500L11 3.500L5 7.500Z" fill="#e3e6ea"/><path d="M1 6.500L5 9L11 5" stroke="#9fb0a6" fill="none" stroke-width="1.300"/><path d="M1 8.200L5 10.700L11 6.700" stroke="#7f8b90" fill="none" stroke-width="1.200"/></g><circle cx="70.1" cy="9.1" r="1.900" fill="#f2d46b"/><g transform="translate(76.7,1.5) scale(0.8)"><path d="M1 5Q3 1 8 1.500L11 3.500L5 7.500Z" fill="#e3e6ea"/><path d="M1 6.500L5 9L11 5" stroke="#9fb0a6" fill="none" stroke-width="1.300"/><path d="M1 8.200L5 10.700L11 6.700" stroke="#7f8b90" fill="none" stroke-width="1.200"/></g><circle cx="84.1" cy="9.1" r="1.900" fill="#58c4c4"/><g transform="translate(90.7,1.5) scale(0.8)"><path d="M1 5Q3 1 8 1.500L11 3.500L5 7.500Z" fill="#e3e6ea"/><path d="M1 6.500L5 9L11 5" stroke="#9fb0a6" fill="none" stroke-width="1.300"/><path d="M1 8.200L5 10.700L11 6.700" stroke="#7f8b90" fill="none" stroke-width="1.200"/></g><circle cx="98.1" cy="9.1" r="1.900" fill="#e0565b"/><g transform="translate(104.7,1.5) scale(0.8)"><path d="M1 5Q3 1 8 1.500L11 3.500L5 7.500Z" fill="#e3e6ea"/><path d="M1 6.500L5 9L11 5" stroke="#9fb0a6" fill="none" stroke-width="1.300"/><path d="M1 8.200L5 10.700L11 6.700" stroke="#7f8b90" fill="none" stroke-width="1.200"/></g><circle cx="112.1" cy="9.1" r="1.900" fill="#8fce8f"/></svg>
<svg style="position:absolute;left:640.0px;top:113.0px;" width="50" height="14" viewBox="0 0 50 14"><circle cx="9.500" cy="7.300" r="3.800" fill="none" stroke="#35b777" stroke-width="2"/><path d="M7.500 7L9.300 8.500L12 5.500" stroke="#2a3340" stroke-width="1" fill="none"/><path d="M4.800 4L7 7.300H3Z M14.200 10.500L12 7.300H16Z" fill="#35b777"/><rect x="19.800" y="3.300" width="4.800" height="4.800" fill="#eef0f3"/><path d="M21 10.800Q25 10.800 28 8" stroke="#8a919d" stroke-width="1.300" fill="none"/><circle cx="37.600" cy="7.300" r="3" fill="none" stroke="#f4f5f7" stroke-width="2"/><g stroke="#f4f5f7" stroke-width="1.500"><path d="M37.600 2.600V12M32.900 7.300H42.300M34.300 4L40.900 10.600M40.900 4L34.300 10.600"/></g><circle cx="37.600" cy="7.300" r="1.400" fill="#3b4453"/></svg>
<div style="position:absolute;left:369.8px;top:128.3px;width:318.0px;height:12.7px;background:#454e5e;"></div>
<div style="position:absolute;left:380.8px;top:128.3px;width:0.9px;height:12.7px;background:#38404e;"></div>
<div style="position:absolute;left:426.3px;top:128.3px;width:0.9px;height:12.7px;background:#38404e;"></div>
<div style="position:absolute;left:437.7px;top:128.3px;width:0.9px;height:12.7px;background:#38404e;"></div>
<div style="position:absolute;left:448.7px;top:128.3px;width:0.9px;height:12.7px;background:#38404e;"></div>
<div style="position:absolute;left:459.7px;top:128.3px;width:0.9px;height:12.7px;background:#38404e;"></div>
<div style="position:absolute;left:470.8px;top:128.3px;width:0.9px;height:12.7px;background:#38404e;"></div>
<div style="position:absolute;left:499.0px;top:128.3px;width:0.9px;height:12.7px;background:#38404e;"></div>
<div style="position:absolute;left:562.5px;top:128.3px;width:0.9px;height:12.7px;background:#38404e;"></div>
<div style="position:absolute;left:604.5px;top:128.3px;width:0.9px;height:12.7px;background:#38404e;"></div>
<div style="position:absolute;left:636.5px;top:128.3px;width:0.9px;height:12.7px;background:#38404e;"></div>
<div style="position:absolute;left:647.5px;top:128.3px;width:0.9px;height:12.7px;background:#38404e;"></div>
<div style="position:absolute;left:368.3px;top:128.3px;width:1.3px;height:126.0px;background:#343c49;"></div>
<div style="position:absolute;left:426.3px;top:141.0px;width:0.9px;height:111.0px;background:#363e4c;"></div>
<svg class="t" style="left:313.0px;top:137px;" width="1" height="1"><text x="0" y="0" font-size="7.4" fill="#e1e4e9" textLength="19.5" lengthAdjust="spacingAndGlyphs" stroke="#e1e4e9" stroke-width="0.25">Filters</text></svg>
<svg class="t" style="left:357.5px;top:137px;" width="1" height="1"><text x="0" y="0" font-size="9" fill="#f0f2f5" font-weight="bold" textLength="8.0" lengthAdjust="spacingAndGlyphs" stroke="#f0f2f5" stroke-width="0.25">«</text></svg>
<svg class="t" style="left:372.0px;top:137px;" width="1" height="1"><text x="0" y="0" font-size="7.4" fill="#e1e4e9" textLength="7.5" lengthAdjust="spacingAndGlyphs" stroke="#e1e4e9" stroke-width="0.25">S..</text></svg>
<svg class="t" style="left:382.7px;top:137px;" width="1" height="1"><text x="0" y="0" font-size="7.4" fill="#e1e4e9" textLength="20.3" lengthAdjust="spacingAndGlyphs" stroke="#e1e4e9" stroke-width="0.25">Name</text></svg>
<svg style="position:absolute;left:419.0px;top:131.0px;" width="8" height="7" viewBox="0 0 8 7"><path d="M1.500 5.500H6.500L4 2.300Z" fill="#e8eaee"/></svg>
<svg class="t" style="left:429.0px;top:137px;" width="1" height="1"><text x="0" y="0" font-size="7.4" fill="#e1e4e9" textLength="7.5" lengthAdjust="spacingAndGlyphs" stroke="#e1e4e9" stroke-width="0.25">O.</text></svg>
<svg class="t" style="left:440.5px;top:137px;" width="1" height="1"><text x="0" y="0" font-size="7.4" fill="#e1e4e9" textLength="7.0" lengthAdjust="spacingAndGlyphs" stroke="#e1e4e9" stroke-width="0.25">F..</text></svg>
<svg class="t" style="left:451.7px;top:137px;" width="1" height="1"><text x="0" y="0" font-size="7.4" fill="#e1e4e9" textLength="6.8" lengthAdjust="spacingAndGlyphs" stroke="#e1e4e9" stroke-width="0.25">L..</text></svg>
<svg class="t" style="left:462.0px;top:137px;" width="1" height="1"><text x="0" y="0" font-size="7.4" fill="#e1e4e9" textLength="7.5" lengthAdjust="spacingAndGlyphs" stroke="#e1e4e9" stroke-width="0.25">P..</text></svg>
<svg class="t" style="left:473.7px;top:137px;" width="1" height="1"><text x="0" y="0" font-size="7.4" fill="#e1e4e9" textLength="17.3" lengthAdjust="spacingAndGlyphs" stroke="#e1e4e9" stroke-width="0.25">Color</text></svg>
<svg class="t" style="left:502.4px;top:137px;" width="1" height="1"><text x="0" y="0" font-size="7.4" fill="#e1e4e9" textLength="28.3" lengthAdjust="spacingAndGlyphs" stroke="#e1e4e9" stroke-width="0.25">Linetype</text></svg>
<svg class="t" style="left:565.4px;top:137px;" width="1" height="1"><text x="0" y="0" font-size="7.4" fill="#e1e4e9" textLength="35.3" lengthAdjust="spacingAndGlyphs" stroke="#e1e4e9" stroke-width="0.25">Lineweight</text></svg>
<svg class="t" style="left:606.7px;top:137px;" width="1" height="1"><text x="0" y="0" font-size="7.4" fill="#e1e4e9" textLength="27.3" lengthAdjust="spacingAndGlyphs" stroke="#e1e4e9" stroke-width="0.25">Transp...</text></svg>
<svg class="t" style="left:639.5px;top:137px;" width="1" height="1"><text x="0" y="0" font-size="7.4" fill="#e1e4e9" textLength="6.5" lengthAdjust="spacingAndGlyphs" stroke="#e1e4e9" stroke-width="0.25">N.</text></svg>
<svg class="t" style="left:651.0px;top:137px;" width="1" height="1"><text x="0" y="0" font-size="7.4" fill="#e1e4e9" textLength="36.8" lengthAdjust="spacingAndGlyphs" stroke="#e1e4e9" stroke-width="0.25">Description</text></svg>
<svg style="position:absolute;left:309.5px;top:141.0px;" width="59" height="26" viewBox="0 0 59 26"><rect x="4.500" y="7" width="5" height="5" fill="#e8eaee"/><path d="M5.500 9.500H8.500" stroke="#3b4453" stroke-width="1"/><path d="M10 9.500H13M22.500 13V19.500H26" stroke="#7d8592" stroke-width=".8" fill="none"/><g transform="translate(14.7,3.5) scale(0.8)"><path d="M1 5Q3 1 8 1.500L11 3.500L5 7.500Z" fill="#e3e6ea"/><path d="M1 6.500L5 9L11 5" stroke="#9fb0a6" fill="none" stroke-width="1.300"/><path d="M1 8.200L5 10.700L11 6.700" stroke="#7f8b90" fill="none" stroke-width="1.200"/></g><rect x="25" y="3" width="12" height="11.500" fill="#5a6a8d"/><g fill="#d4d8de"><rect x="27" y="16.500" width="5" height="3"/><rect x="27" y="20.500" width="2.300" height="2.500"/><rect x="30" y="20.500" width="2.300" height="4"/></g></svg>
<svg class="t" style="left:336.0px;top:152px;" width="1" height="1"><text x="0" y="0" font-size="7.4" fill="#dfe3ea" textLength="9.5" lengthAdjust="spacingAndGlyphs" stroke="#dfe3ea" stroke-width="0.25">All</text></svg>
<div style="position:absolute;left:346px;top:154px;width:21.800px;height:12px;overflow:hidden">
<svg class="t" style="left:2.0px;top:9px;" width="1" height="1"><text x="0" y="0" font-size="7.4" fill="#e6e9ed" textLength="48.0" lengthAdjust="spacingAndGlyphs" stroke="#e6e9ed" stroke-width="0.25">All Used Layers</text></svg>
</div>
<div style="position:absolute;left:369.8px;top:207.7px;width:56.5px;height:10.8px;background:#6a7ba4;"></div>
<div style="position:absolute;left:427.2px;top:207.7px;width:260.6px;height:10.8px;background:#5d6c93;"></div>
<svg style="position:absolute;left:369.8px;top:141.4px;" width="320" height="11" viewBox="0 0 320 11"><path d="M3 5.500L5.500 8L10.500 2.500" stroke="#6cc58f" stroke-width="2" fill="none"/><circle cx="62" cy="4.300" r="2.700" fill="#ffe39a"/><rect x="61" y="6.500" width="2" height="2" fill="#ffe39a"/><rect x="61" y="8.300" width="2" height="1.500" fill="#f4f4f4"/><g stroke="#b8924a" stroke-width="1"><path d="M73 1.700V9.300M69.200 5.500H76.800M70.400 2.900L75.600 8.100M75.600 2.900L70.400 8.100"/></g><circle cx="73" cy="5.500" r="2.500" fill="#ffe7a3"/><rect x="81.500" y="4.800" width="5" height="4.200" fill="#fad78c"/><path d="M84.500 4.800V3.500Q84.500 1.800 86.200 1.800Q87.800 1.800 87.800 3.300" stroke="#e9dcb8" stroke-width="1" fill="none"/><rect x="83.400" y="6.200" width="1.200" height="1.600" fill="#6b5520"/><rect x="92" y="4" width="7.500" height="4.200" rx=".8" fill="#dfe3e8"/><rect x="93.500" y="1.800" width="4.500" height="2.500" fill="#f6f7f9"/><rect x="93.500" y="6.500" width="4.500" height="3" fill="#fff" stroke="#9aa1ad" stroke-width=".5"/><rect x="102.800" y="2" width="7.600" height="7.600" fill="#fff" stroke="#2d3440" stroke-width=".4"/><path d="M193.800 5.600H207" stroke="#e8eaee" stroke-width="1"/><g stroke="#e6e9ed" stroke-width="1.300" fill="none"><path d="M270.300 3L275 7.700M275 3L270.300 7.700"/></g><circle cx="275.800" cy="8" r="1.400" fill="#d4b37a"/></svg>
<svg class="t" style="left:382.7px;top:149px;" width="1" height="1"><text x="0" y="0" font-size="7.5" fill="#f1f3f6" textLength="3.0" lengthAdjust="spacingAndGlyphs" stroke="#f1f3f6" stroke-width="0.25">0</text></svg>
<svg class="t" style="left:483.0px;top:149px;" width="1" height="1"><text x="0" y="0" font-size="7.5" fill="#f1f3f6" textLength="15.4" lengthAdjust="spacingAndGlyphs" stroke="#f1f3f6" stroke-width="0.25">wh...</text></svg>
<svg class="t" style="left:502.4px;top:149px;" width="1" height="1"><text x="0" y="0" font-size="7.5" fill="#f1f3f6" textLength="45.6" lengthAdjust="spacingAndGlyphs" stroke="#f1f3f6" stroke-width="0.25">CONTINUOUS</text></svg>
<svg class="t" style="left:580.4px;top:149px;" width="1" height="1"><text x="0" y="0" font-size="7.5" fill="#f1f3f6" textLength="21.0" lengthAdjust="spacingAndGlyphs" stroke="#f1f3f6" stroke-width="0.25">Defa...</text></svg>
<svg class="t" style="left:606.7px;top:149px;" width="1" height="1"><text x="0" y="0" font-size="7.5" fill="#f1f3f6" textLength="3.8" lengthAdjust="spacingAndGlyphs" stroke="#f1f3f6" stroke-width="0.25">0</text></svg>
<svg style="position:absolute;left:369.8px;top:152.4px;" width="320" height="11" viewBox="0 0 320 11"><path d="M2 8L5 3.700Q8 2.600 11 3L8 7.300Q5 8.400 2 8Z" fill="#b4e0f3" stroke="#2c3a4a" stroke-width=".5"/><circle cx="62" cy="4.300" r="2.700" fill="#ffe39a"/><rect x="61" y="6.500" width="2" height="2" fill="#ffe39a"/><rect x="61" y="8.300" width="2" height="1.500" fill="#f4f4f4"/><g stroke="#45c9d6" stroke-width="1.300"><path d="M73 1.800V9.200M69.800 3.600L76.200 7.400M76.200 3.600L69.800 7.400"/></g><rect x="81.500" y="4.800" width="5" height="4.200" fill="#fad78c"/><path d="M84.500 4.800V3.500Q84.500 1.800 86.200 1.800Q87.800 1.800 87.800 3.300" stroke="#e9dcb8" stroke-width="1" fill="none"/><rect x="83.400" y="6.200" width="1.200" height="1.600" fill="#6b5520"/><rect x="92" y="4" width="7.500" height="4.200" rx=".8" fill="#dfe3e8"/><rect x="93.500" y="1.800" width="4.500" height="2.500" fill="#f6f7f9"/><rect x="93.500" y="6.500" width="4.500" height="3" fill="#fff" stroke="#9aa1ad" stroke-width=".5"/><rect x="102.800" y="2" width="7.600" height="7.600" fill="#ff0000" stroke="#2d3440" stroke-width=".4"/><path d="M193.800 5.600H207" stroke="#e8eaee" stroke-width="1"/><g stroke="#e6e9ed" stroke-width="1.300" fill="none"><path d="M270.300 3L275 7.700M275 3L270.300 7.700"/></g><circle cx="275.800" cy="8" r="1.400" fill="#58c4c4"/></svg>
<svg class="t" style="left:382.7px;top:160px;" width="1" height="1"><text x="0" y="0" font-size="7.5" fill="#f1f3f6" textLength="33.3" lengthAdjust="spacingAndGlyphs" stroke="#f1f3f6" stroke-width="0.25">AREA-FILL</text></svg>
<svg class="t" style="left:483.0px;top:160px;" width="1" height="1"><text x="0" y="0" font-size="7.5" fill="#f1f3f6" textLength="10.5" lengthAdjust="spacingAndGlyphs" stroke="#f1f3f6" stroke-width="0.25">red</text></svg>
<svg class="t" style="left:502.4px;top:160px;" width="1" height="1"><text x="0" y="0" font-size="7.5" fill="#f1f3f6" textLength="45.6" lengthAdjust="spacingAndGlyphs" stroke="#f1f3f6" stroke-width="0.25">CONTINUOUS</text></svg>
<svg class="t" style="left:580.4px;top:160px;" width="1" height="1"><text x="0" y="0" font-size="7.5" fill="#f1f3f6" textLength="21.0" lengthAdjust="spacingAndGlyphs" stroke="#f1f3f6" stroke-width="0.25">Defa...</text></svg>
<svg class="t" style="left:606.7px;top:160px;" width="1" height="1"><text x="0" y="0" font-size="7.5" fill="#f1f3f6" textLength="3.8" lengthAdjust="spacingAndGlyphs" stroke="#f1f3f6" stroke-width="0.25">0</text></svg>
<svg style="position:absolute;left:369.8px;top:163.4px;" width="320" height="11" viewBox="0 0 320 11"><path d="M2 8L5 3.700Q8 2.600 11 3L8 7.300Q5 8.400 2 8Z" fill="#b4e0f3" stroke="#2c3a4a" stroke-width=".5"/><circle cx="62" cy="4.300" r="2.700" fill="#ffe39a"/><rect x="61" y="6.500" width="2" height="2" fill="#ffe39a"/><rect x="61" y="8.300" width="2" height="1.500" fill="#f4f4f4"/><g stroke="#b8924a" stroke-width="1"><path d="M73 1.700V9.300M69.200 5.500H76.800M70.400 2.900L75.600 8.100M75.600 2.900L70.400 8.100"/></g><circle cx="73" cy="5.500" r="2.500" fill="#ffe7a3"/><rect x="81.500" y="4.800" width="5" height="4.200" fill="#fad78c"/><path d="M84.500 4.800V3.500Q84.500 1.800 86.200 1.800Q87.800 1.800 87.800 3.300" stroke="#e9dcb8" stroke-width="1" fill="none"/><rect x="83.400" y="6.200" width="1.200" height="1.600" fill="#6b5520"/><rect x="92" y="4" width="7.500" height="4.200" rx=".8" fill="#dfe3e8"/><rect x="93.500" y="1.800" width="4.500" height="2.500" fill="#f6f7f9"/><rect x="93.500" y="6.500" width="4.500" height="3" fill="#fff" stroke="#9aa1ad" stroke-width=".5"/><rect x="102.800" y="2" width="7.600" height="7.600" fill="#ff00ff" stroke="#2d3440" stroke-width=".4"/><path d="M193.800 5.600H207" stroke="#e8eaee" stroke-width="1"/><g stroke="#e6e9ed" stroke-width="1.300" fill="none"><path d="M270.300 3L275 7.700M275 3L270.300 7.700"/></g><circle cx="275.800" cy="8" r="1.400" fill="#d4b37a"/></svg>
<svg class="t" style="left:382.7px;top:171px;" width="1" height="1"><text x="0" y="0" font-size="7.5" fill="#f1f3f6" textLength="37.6" lengthAdjust="spacingAndGlyphs" stroke="#f1f3f6" stroke-width="0.25">CASEWORK</text></svg>
<svg class="t" style="left:483.0px;top:171px;" width="1" height="1"><text x="0" y="0" font-size="7.5" fill="#f1f3f6" textLength="16.2" lengthAdjust="spacingAndGlyphs" stroke="#f1f3f6" stroke-width="0.25">ma...</text></svg>
<svg class="t" style="left:502.4px;top:171px;" width="1" height="1"><text x="0" y="0" font-size="7.5" fill="#f1f3f6" textLength="45.6" lengthAdjust="spacingAndGlyphs" stroke="#f1f3f6" stroke-width="0.25">CONTINUOUS</text></svg>
<svg class="t" style="left:580.4px;top:171px;" width="1" height="1"><text x="0" y="0" font-size="7.5" fill="#f1f3f6" textLength="21.0" lengthAdjust="spacingAndGlyphs" stroke="#f1f3f6" stroke-width="0.25">Defa...</text></svg>
<svg class="t" style="left:606.7px;top:171px;" width="1" height="1"><text x="0" y="0" font-size="7.5" fill="#f1f3f6" textLength="3.8" lengthAdjust="spacingAndGlyphs" stroke="#f1f3f6" stroke-width="0.25">0</text></svg>
<svg style="position:absolute;left:369.8px;top:174.4px;" width="320" height="11" viewBox="0 0 320 11"><path d="M2 8L5 3.700Q8 2.600 11 3L8 7.300Q5 8.400 2 8Z" fill="#b4e0f3" stroke="#2c3a4a" stroke-width=".5"/><circle cx="62" cy="4.300" r="2.700" fill="#ffe39a"/><rect x="61" y="6.500" width="2" height="2" fill="#ffe39a"/><rect x="61" y="8.300" width="2" height="1.500" fill="#f4f4f4"/><g stroke="#b8924a" stroke-width="1"><path d="M73 1.700V9.300M69.200 5.500H76.800M70.400 2.900L75.600 8.100M75.600 2.900L70.400 8.100"/></g><circle cx="73" cy="5.500" r="2.500" fill="#ffe7a3"/><rect x="81.500" y="4.800" width="5" height="4.200" fill="#fad78c"/><path d="M84.500 4.800V3.500Q84.500 1.800 86.200 1.800Q87.800 1.800 87.800 3.300" stroke="#e9dcb8" stroke-width="1" fill="none"/><rect x="83.400" y="6.200" width="1.200" height="1.600" fill="#6b5520"/><rect x="92" y="4" width="7.500" height="4.200" rx=".8" fill="#dfe3e8"/><rect x="93.500" y="1.800" width="4.500" height="2.500" fill="#f6f7f9"/><rect x="93.500" y="6.500" width="4.500" height="3" fill="#fff" stroke="#9aa1ad" stroke-width=".5"/><rect x="102.800" y="2" width="7.600" height="7.600" fill="#ffff00" stroke="#2d3440" stroke-width=".4"/><path d="M193.800 5.600H207" stroke="#e8eaee" stroke-width="1"/><g stroke="#e6e9ed" stroke-width="1.300" fill="none"><path d="M270.300 3L275 7.700M275 3L270.300 7.700"/></g><circle cx="275.800" cy="8" r="1.400" fill="#d4b37a"/></svg>
<svg class="t" style="left:382.7px;top:182px;" width="1" height="1"><text x="0" y="0" font-size="7.5" fill="#f1f3f6" textLength="24.8" lengthAdjust="spacingAndGlyphs" stroke="#f1f3f6" stroke-width="0.25">CHAIRS</text></svg>
<svg class="t" style="left:483.0px;top:182px;" width="1" height="1"><text x="0" y="0" font-size="7.5" fill="#f1f3f6" textLength="15.4" lengthAdjust="spacingAndGlyphs" stroke="#f1f3f6" stroke-width="0.25">yel...</text></svg>
<svg class="t" style="left:502.4px;top:182px;" width="1" height="1"><text x="0" y="0" font-size="7.5" fill="#f1f3f6" textLength="45.6" lengthAdjust="spacingAndGlyphs" stroke="#f1f3f6" stroke-width="0.25">CONTINUOUS</text></svg>
<svg class="t" style="left:580.4px;top:182px;" width="1" height="1"><text x="0" y="0" font-size="7.5" fill="#f1f3f6" textLength="21.0" lengthAdjust="spacingAndGlyphs" stroke="#f1f3f6" stroke-width="0.25">Defa...</text></svg>
<svg class="t" style="left:606.7px;top:182px;" width="1" height="1"><text x="0" y="0" font-size="7.5" fill="#f1f3f6" textLength="3.8" lengthAdjust="spacingAndGlyphs" stroke="#f1f3f6" stroke-width="0.25">0</text></svg>
<svg style="position:absolute;left:369.8px;top:185.4px;" width="320" height="11" viewBox="0 0 320 11"><path d="M2 8L5 3.700Q8 2.600 11 3L8 7.300Q5 8.400 2 8Z" fill="#b4e0f3" stroke="#2c3a4a" stroke-width=".5"/><circle cx="62" cy="4.300" r="2.700" fill="#ffe39a"/><rect x="61" y="6.500" width="2" height="2" fill="#ffe39a"/><rect x="61" y="8.300" width="2" height="1.500" fill="#f4f4f4"/><g stroke="#b8924a" stroke-width="1"><path d="M73 1.700V9.300M69.200 5.500H76.800M70.400 2.900L75.600 8.100M75.600 2.900L70.400 8.100"/></g><circle cx="73" cy="5.500" r="2.500" fill="#ffe7a3"/><rect x="81.500" y="4.800" width="5" height="4.200" fill="#fad78c"/><path d="M84.500 4.800V3.500Q84.500 1.800 86.200 1.800Q87.800 1.800 87.800 3.300" stroke="#e9dcb8" stroke-width="1" fill="none"/><rect x="83.400" y="6.200" width="1.200" height="1.600" fill="#6b5520"/><rect x="92" y="4" width="7.500" height="4.200" rx=".8" fill="#dfe3e8"/><rect x="93.500" y="1.800" width="4.500" height="2.500" fill="#f6f7f9"/><rect x="93.500" y="6.500" width="4.500" height="3" fill="#fff" stroke="#9aa1ad" stroke-width=".5"/><rect x="102.800" y="2" width="7.600" height="7.600" fill="#fff" stroke="#2d3440" stroke-width=".4"/><path d="M193.800 5.600H207" stroke="#e8eaee" stroke-width="1"/><g stroke="#e6e9ed" stroke-width="1.300" fill="none"><path d="M270.300 3L275 7.700M275 3L270.300 7.700"/></g><circle cx="275.800" cy="8" r="1.400" fill="#d4b37a"/></svg>
<svg class="t" style="left:382.7px;top:193px;" width="1" height="1"><text x="0" y="0" font-size="7.5" fill="#f1f3f6" textLength="23.8" lengthAdjust="spacingAndGlyphs" stroke="#f1f3f6" stroke-width="0.25">DOORS</text></svg>
<svg class="t" style="left:483.0px;top:193px;" width="1" height="1"><text x="0" y="0" font-size="7.5" fill="#f1f3f6" textLength="15.4" lengthAdjust="spacingAndGlyphs" stroke="#f1f3f6" stroke-width="0.25">wh...</text></svg>
<svg class="t" style="left:502.4px;top:193px;" width="1" height="1"><text x="0" y="0" font-size="7.5" fill="#f1f3f6" textLength="45.6" lengthAdjust="spacingAndGlyphs" stroke="#f1f3f6" stroke-width="0.25">CONTINUOUS</text></svg>
<svg class="t" style="left:580.4px;top:193px;" width="1" height="1"><text x="0" y="0" font-size="7.5" fill="#f1f3f6" textLength="21.0" lengthAdjust="spacingAndGlyphs" stroke="#f1f3f6" stroke-width="0.25">Defa...</text></svg>
<svg class="t" style="left:606.7px;top:193px;" width="1" height="1"><text x="0" y="0" font-size="7.5" fill="#f1f3f6" textLength="3.8" lengthAdjust="spacingAndGlyphs" stroke="#f1f3f6" stroke-width="0.25">0</text></svg>
<svg style="position:absolute;left:369.8px;top:196.4px;" width="320" height="11" viewBox="0 0 320 11"><path d="M2 8L5 3.700Q8 2.600 11 3L8 7.300Q5 8.400 2 8Z" fill="#b4e0f3" stroke="#2c3a4a" stroke-width=".5"/><circle cx="62" cy="4.300" r="2.700" fill="#ffe39a"/><rect x="61" y="6.500" width="2" height="2" fill="#ffe39a"/><rect x="61" y="8.300" width="2" height="1.500" fill="#f4f4f4"/><g stroke="#45c9d6" stroke-width="1.300"><path d="M73 1.800V9.200M69.800 3.600L76.200 7.400M76.200 3.600L69.800 7.400"/></g><rect x="81.500" y="4.800" width="5" height="4.200" fill="#fad78c"/><path d="M84.500 4.800V3.500Q84.500 1.800 86.200 1.800Q87.800 1.800 87.800 3.300" stroke="#e9dcb8" stroke-width="1" fill="none"/><rect x="83.400" y="6.200" width="1.200" height="1.600" fill="#6b5520"/><rect x="92" y="4" width="7.500" height="4.200" rx=".8" fill="#dfe3e8"/><rect x="93.500" y="1.800" width="4.500" height="2.500" fill="#f6f7f9"/><rect x="93.500" y="6.500" width="4.500" height="3" fill="#fff" stroke="#9aa1ad" stroke-width=".5"/><rect x="102.800" y="2" width="7.600" height="7.600" fill="#ffff00" stroke="#2d3440" stroke-width=".4"/><path d="M193.800 5.600H207" stroke="#e8eaee" stroke-width="1"/><g stroke="#e6e9ed" stroke-width="1.300" fill="none"><path d="M270.300 3L275 7.700M275 3L270.300 7.700"/></g><circle cx="275.800" cy="8" r="1.400" fill="#d4b37a"/></svg>
<svg class="t" style="left:382.7px;top:204px;" width="1" height="1"><text x="0" y="0" font-size="7.5" fill="#f1f3f6" textLength="40.3" lengthAdjust="spacingAndGlyphs" stroke="#f1f3f6" stroke-width="0.25">FOUNDAT...</text></svg>
<svg class="t" style="left:483.0px;top:204px;" width="1" height="1"><text x="0" y="0" font-size="7.5" fill="#f1f3f6" textLength="15.4" lengthAdjust="spacingAndGlyphs" stroke="#f1f3f6" stroke-width="0.25">yel...</text></svg>
<svg class="t" style="left:502.4px;top:204px;" width="1" height="1"><text x="0" y="0" font-size="7.5" fill="#f1f3f6" textLength="45.6" lengthAdjust="spacingAndGlyphs" stroke="#f1f3f6" stroke-width="0.25">CONTINUOUS</text></svg>
<svg class="t" style="left:580.4px;top:204px;" width="1" height="1"><text x="0" y="0" font-size="7.5" fill="#f1f3f6" textLength="21.0" lengthAdjust="spacingAndGlyphs" stroke="#f1f3f6" stroke-width="0.25">Defa...</text></svg>
<svg class="t" style="left:606.7px;top:204px;" width="1" height="1"><text x="0" y="0" font-size="7.5" fill="#f1f3f6" textLength="3.8" lengthAdjust="spacingAndGlyphs" stroke="#f1f3f6" stroke-width="0.25">0</text></svg>
<svg style="position:absolute;left:369.8px;top:207.4px;" width="320" height="11" viewBox="0 0 320 11"><path d="M2 8L5 3.700Q8 2.600 11 3L8 7.300Q5 8.400 2 8Z" fill="#b4e0f3" stroke="#2c3a4a" stroke-width=".5"/><circle cx="62" cy="4.300" r="2.700" fill="#ffe39a"/><rect x="61" y="6.500" width="2" height="2" fill="#ffe39a"/><rect x="61" y="8.300" width="2" height="1.500" fill="#f4f4f4"/><g stroke="#b8924a" stroke-width="1"><path d="M73 1.700V9.300M69.200 5.500H76.800M70.400 2.900L75.600 8.100M75.600 2.900L70.400 8.100"/></g><circle cx="73" cy="5.500" r="2.500" fill="#ffe7a3"/><rect x="81.500" y="4.800" width="5" height="4.200" fill="#fad78c"/><path d="M84.500 4.800V3.500Q84.500 1.800 86.200 1.800Q87.800 1.800 87.800 3.300" stroke="#e9dcb8" stroke-width="1" fill="none"/><rect x="83.400" y="6.200" width="1.200" height="1.600" fill="#6b5520"/><rect x="92" y="4" width="7.500" height="4.200" rx=".8" fill="#dfe3e8"/><rect x="93.500" y="1.800" width="4.500" height="2.500" fill="#f6f7f9"/><rect x="93.500" y="6.500" width="4.500" height="3" fill="#fff" stroke="#9aa1ad" stroke-width=".5"/><rect x="102.800" y="2" width="7.600" height="7.600" fill="#fff" stroke="#2d3440" stroke-width=".4"/><path d="M193.800 5.600H207" stroke="#e8eaee" stroke-width="1"/><g stroke="#e6e9ed" stroke-width="1.300" fill="none"><path d="M270.300 3L275 7.700M275 3L270.300 7.700"/></g><circle cx="275.800" cy="8" r="1.400" fill="#d4b37a"/></svg>
<svg class="t" style="left:382.7px;top:215px;" width="1" height="1"><text x="0" y="0" font-size="7.5" fill="#f1f3f6" textLength="37.3" lengthAdjust="spacingAndGlyphs" stroke="#f1f3f6" stroke-width="0.25">FURNITURE</text></svg>
<svg class="t" style="left:483.0px;top:215px;" width="1" height="1"><text x="0" y="0" font-size="7.5" fill="#f1f3f6" textLength="15.4" lengthAdjust="spacingAndGlyphs" stroke="#f1f3f6" stroke-width="0.25">wh...</text></svg>
<svg class="t" style="left:502.4px;top:215px;" width="1" height="1"><text x="0" y="0" font-size="7.5" fill="#f1f3f6" textLength="45.6" lengthAdjust="spacingAndGlyphs" stroke="#f1f3f6" stroke-width="0.25">CONTINUOUS</text></svg>
<svg class="t" style="left:580.4px;top:215px;" width="1" height="1"><text x="0" y="0" font-size="7.5" fill="#f1f3f6" textLength="21.0" lengthAdjust="spacingAndGlyphs" stroke="#f1f3f6" stroke-width="0.25">Defa...</text></svg>
<svg class="t" style="left:606.7px;top:215px;" width="1" height="1"><text x="0" y="0" font-size="7.5" fill="#f1f3f6" textLength="3.8" lengthAdjust="spacingAndGlyphs" stroke="#f1f3f6" stroke-width="0.25">0</text></svg>
<svg style="position:absolute;left:369.8px;top:218.4px;" width="320" height="11" viewBox="0 0 320 11"><path d="M2 8L5 3.700Q8 2.600 11 3L8 7.300Q5 8.400 2 8Z" fill="#b4e0f3" stroke="#2c3a4a" stroke-width=".5"/><circle cx="62" cy="4.300" r="2.700" fill="#7fdcec"/><rect x="61" y="6.500" width="2" height="2" fill="#7fdcec"/><rect x="61" y="8.300" width="2" height="1.500" fill="#f4f4f4"/><g stroke="#b8924a" stroke-width="1"><path d="M73 1.700V9.300M69.200 5.500H76.800M70.400 2.900L75.600 8.100M75.600 2.900L70.400 8.100"/></g><circle cx="73" cy="5.500" r="2.500" fill="#ffe7a3"/><rect x="81.500" y="4.800" width="5" height="4.200" fill="#fad78c"/><path d="M84.500 4.800V3.500Q84.500 1.800 86.200 1.800Q87.800 1.800 87.800 3.300" stroke="#e9dcb8" stroke-width="1" fill="none"/><rect x="83.400" y="6.200" width="1.200" height="1.600" fill="#6b5520"/><rect x="92" y="4" width="7.500" height="4.200" rx=".8" fill="#dfe3e8"/><rect x="93.500" y="1.800" width="4.500" height="2.500" fill="#f6f7f9"/><rect x="93.500" y="6.500" width="4.500" height="3" fill="#fff" stroke="#9aa1ad" stroke-width=".5"/><rect x="102.800" y="2" width="7.600" height="7.600" fill="#ffff00" stroke="#2d3440" stroke-width=".4"/><path d="M193.800 5.600H207" stroke="#e8eaee" stroke-width="1"/><g stroke="#e6e9ed" stroke-width="1.300" fill="none"><path d="M270.300 3L275 7.700M275 3L270.300 7.700"/></g><circle cx="275.800" cy="8" r="1.400" fill="#d4b37a"/></svg>
<svg class="t" style="left:382.7px;top:226px;" width="1" height="1"><text x="0" y="0" font-size="7.5" fill="#f1f3f6" textLength="27.3" lengthAdjust="spacingAndGlyphs" stroke="#f1f3f6" stroke-width="0.25">HEADER</text></svg>
<svg class="t" style="left:483.0px;top:226px;" width="1" height="1"><text x="0" y="0" font-size="7.5" fill="#f1f3f6" textLength="15.4" lengthAdjust="spacingAndGlyphs" stroke="#f1f3f6" stroke-width="0.25">yel...</text></svg>
<svg class="t" style="left:502.4px;top:226px;" width="1" height="1"><text x="0" y="0" font-size="7.5" fill="#f1f3f6" textLength="45.6" lengthAdjust="spacingAndGlyphs" stroke="#f1f3f6" stroke-width="0.25">CONTINUOUS</text></svg>
<svg class="t" style="left:580.4px;top:226px;" width="1" height="1"><text x="0" y="0" font-size="7.5" fill="#f1f3f6" textLength="21.0" lengthAdjust="spacingAndGlyphs" stroke="#f1f3f6" stroke-width="0.25">Defa...</text></svg>
<svg class="t" style="left:606.7px;top:226px;" width="1" height="1"><text x="0" y="0" font-size="7.5" fill="#f1f3f6" textLength="3.8" lengthAdjust="spacingAndGlyphs" stroke="#f1f3f6" stroke-width="0.25">0</text></svg>
<svg style="position:absolute;left:369.8px;top:229.4px;" width="320" height="11" viewBox="0 0 320 11"><path d="M2 8L5 3.700Q8 2.600 11 3L8 7.300Q5 8.400 2 8Z" fill="#b4e0f3" stroke="#2c3a4a" stroke-width=".5"/><circle cx="62" cy="4.300" r="2.700" fill="#7fdcec"/><rect x="61" y="6.500" width="2" height="2" fill="#7fdcec"/><rect x="61" y="8.300" width="2" height="1.500" fill="#f4f4f4"/><g stroke="#b8924a" stroke-width="1"><path d="M73 1.700V9.300M69.200 5.500H76.800M70.400 2.900L75.600 8.100M75.600 2.900L70.400 8.100"/></g><circle cx="73" cy="5.500" r="2.500" fill="#ffe7a3"/><rect x="81.500" y="4.800" width="5" height="4.200" fill="#fad78c"/><path d="M84.500 4.800V3.500Q84.500 1.800 86.200 1.800Q87.800 1.800 87.800 3.300" stroke="#e9dcb8" stroke-width="1" fill="none"/><rect x="83.400" y="6.200" width="1.200" height="1.600" fill="#6b5520"/><rect x="92" y="4" width="7.500" height="4.200" rx=".8" fill="#dfe3e8"/><rect x="93.500" y="1.800" width="4.500" height="2.500" fill="#f6f7f9"/><rect x="93.500" y="6.500" width="4.500" height="3" fill="#fff" stroke="#9aa1ad" stroke-width=".5"/><rect x="102.800" y="2" width="7.600" height="7.600" fill="#00ff00" stroke="#2d3440" stroke-width=".4"/><path d="M193.800 5.600H207" stroke="#e8eaee" stroke-width="1"/><g stroke="#e6e9ed" stroke-width="1.300" fill="none"><path d="M270.300 3L275 7.700M275 3L270.300 7.700"/></g><circle cx="275.800" cy="8" r="1.400" fill="#d4b37a"/></svg>
<svg class="t" style="left:382.7px;top:237px;" width="1" height="1"><text x="0" y="0" font-size="7.5" fill="#f1f3f6" textLength="33.3" lengthAdjust="spacingAndGlyphs" stroke="#f1f3f6" stroke-width="0.25">R-CEILING</text></svg>
<svg class="t" style="left:483.0px;top:237px;" width="1" height="1"><text x="0" y="0" font-size="7.5" fill="#f1f3f6" textLength="12.1" lengthAdjust="spacingAndGlyphs" stroke="#f1f3f6" stroke-width="0.25">gr...</text></svg>
<svg class="t" style="left:502.4px;top:237px;" width="1" height="1"><text x="0" y="0" font-size="7.5" fill="#f1f3f6" textLength="45.6" lengthAdjust="spacingAndGlyphs" stroke="#f1f3f6" stroke-width="0.25">CONTINUOUS</text></svg>
<svg class="t" style="left:580.4px;top:237px;" width="1" height="1"><text x="0" y="0" font-size="7.5" fill="#f1f3f6" textLength="21.0" lengthAdjust="spacingAndGlyphs" stroke="#f1f3f6" stroke-width="0.25">Defa...</text></svg>
<svg class="t" style="left:606.7px;top:237px;" width="1" height="1"><text x="0" y="0" font-size="7.5" fill="#f1f3f6" textLength="3.8" lengthAdjust="spacingAndGlyphs" stroke="#f1f3f6" stroke-width="0.25">0</text></svg>
<svg style="position:absolute;left:369.8px;top:240.4px;" width="320" height="11" viewBox="0 0 320 11"><path d="M2 8L5 3.700Q8 2.600 11 3L8 7.300Q5 8.400 2 8Z" fill="#b4e0f3" stroke="#2c3a4a" stroke-width=".5"/><circle cx="62" cy="4.300" r="2.700" fill="#ffe39a"/><rect x="61" y="6.500" width="2" height="2" fill="#ffe39a"/><rect x="61" y="8.300" width="2" height="1.500" fill="#f4f4f4"/><g stroke="#b8924a" stroke-width="1"><path d="M73 1.700V9.300M69.200 5.500H76.800M70.400 2.900L75.600 8.100M75.600 2.900L70.400 8.100"/></g><circle cx="73" cy="5.500" r="2.500" fill="#ffe7a3"/><rect x="81.500" y="4.800" width="5" height="4.200" fill="#fad78c"/><path d="M84.500 4.800V3.500Q84.500 1.800 86.200 1.800Q87.800 1.800 87.800 3.300" stroke="#e9dcb8" stroke-width="1" fill="none"/><rect x="83.400" y="6.200" width="1.200" height="1.600" fill="#6b5520"/><rect x="92" y="4" width="7.500" height="4.200" rx=".8" fill="#dfe3e8"/><rect x="93.500" y="1.800" width="4.500" height="2.500" fill="#f6f7f9"/><rect x="93.500" y="6.500" width="4.500" height="3" fill="#fff" stroke="#9aa1ad" stroke-width=".5"/><rect x="102.800" y="2" width="7.600" height="7.600" fill="#fff" stroke="#2d3440" stroke-width=".4"/><path d="M193.800 5.600H207" stroke="#e8eaee" stroke-width="1"/><g stroke="#e6e9ed" stroke-width="1.300" fill="none"><path d="M270.300 3L275 7.700M275 3L270.300 7.700"/></g><circle cx="275.800" cy="8" r="1.400" fill="#d4b37a"/></svg>
<svg class="t" style="left:382.7px;top:248px;" width="1" height="1"><text x="0" y="0" font-size="7.5" fill="#f1f3f6" textLength="23.3" lengthAdjust="spacingAndGlyphs" stroke="#f1f3f6" stroke-width="0.25">WALLS</text></svg>
<svg class="t" style="left:483.0px;top:248px;" width="1" height="1"><text x="0" y="0" font-size="7.5" fill="#f1f3f6" textLength="15.4" lengthAdjust="spacingAndGlyphs" stroke="#f1f3f6" stroke-width="0.25">wh...</text></svg>
<svg class="t" style="left:502.4px;top:248px;" width="1" height="1"><text x="0" y="0" font-size="7.5" fill="#f1f3f6" textLength="45.6" lengthAdjust="spacingAndGlyphs" stroke="#f1f3f6" stroke-width="0.25">CONTINUOUS</text></svg>
<svg class="t" style="left:580.4px;top:248px;" width="1" height="1"><text x="0" y="0" font-size="7.5" fill="#f1f3f6" textLength="21.0" lengthAdjust="spacingAndGlyphs" stroke="#f1f3f6" stroke-width="0.25">Defa...</text></svg>
<svg class="t" style="left:606.7px;top:248px;" width="1" height="1"><text x="0" y="0" font-size="7.5" fill="#f1f3f6" textLength="3.8" lengthAdjust="spacingAndGlyphs" stroke="#f1f3f6" stroke-width="0.25">0</text></svg>
<div style="position:absolute;left:311.0px;top:240.0px;width:55.5px;height:9.3px;background:#f2f2f2;"></div>
<div style="position:absolute;left:320.0px;top:240.0px;width:25.5px;height:9.3px;background:#cfcfcf;"></div>
<svg style="position:absolute;left:311.0px;top:240.0px;" width="56" height="9.3" viewBox="0 0 56 9.3"><path d="M5.500 2.500L3.300 4.650L5.500 6.800M50.500 2.500L52.700 4.650L50.500 6.800" stroke="#333" stroke-width="1.100" fill="none"/></svg>
<div style="position:absolute;left:313.2px;top:253.8px;width:6.8px;height:6.8px;background:#fdfdfd;"></div>
<svg class="t" style="left:323.0px;top:260px;" width="1" height="1"><text x="0" y="0" font-size="7.4" fill="#e6e9ed" textLength="26.0" lengthAdjust="spacingAndGlyphs" stroke="#e6e9ed" stroke-width="0.25">Invert fi</text></svg>
<svg class="t" style="left:357.5px;top:260px;" width="1" height="1"><text x="0" y="0" font-size="9" fill="#f0f2f5" font-weight="bold" textLength="8.0" lengthAdjust="spacingAndGlyphs" stroke="#f0f2f5" stroke-width="0.25">«</text></svg>
<div style="position:absolute;left:369.8px;top:254.0px;width:318.0px;height:10.2px;background:#f2f2f2;"></div>
<div style="position:absolute;left:381.0px;top:254.0px;width:307.0px;height:10.2px;background:#cfcfcf;"></div>
<svg style="position:absolute;left:369.8px;top:254.0px;" width="12" height="10.2" viewBox="0 0 12 10.2"><path d="M6.500 2.800L4.200 5.100L6.500 7.400" stroke="#333" stroke-width="1.100" fill="none"/></svg>
<svg class="t" style="left:312.0px;top:282px;" width="1" height="1"><text x="0" y="0" font-size="7.5" fill="#e9ecf0" textLength="127.0" lengthAdjust="spacingAndGlyphs" stroke="#e9ecf0" stroke-width="0.25">All: 10 layers displayed of 10 total layers</text></svg>
<svg style="position:absolute;left:518.0px;top:211.0px;" width="10" height="14" viewBox="0 0 10 14"><path d="M1.500 1V11L4 8.800L5.800 12.800L7.300 12.100L5.600 8.200H8.800Z" fill="#fff" stroke="#222" stroke-width=".7"/></svg>
<div style="position:absolute;left:456.5px;top:240.8px;width:258.8px;height:174.4px;background:#f0f0f0;box-shadow:0 0 0 0.6px #6a6f78, 0 2px 8px rgba(0,0,0,.45);"></div>
<div style="position:absolute;left:456.5px;top:240.8px;width:258.8px;height:18.2px;background:#ffffff;"></div>
<svg style="position:absolute;left:460.5px;top:244.5px;" width="10.5" height="10.5" viewBox="0 0 10.5 10.5"><rect x="0.3" y="0.3" width="9.4" height="9.4" rx="1.6" fill="#c8102e"/><path d="M2 6.6H8V9H2Z" fill="#8d0a20"/><path d="M3.200 6.300L5 2L6.800 6.300M3.900 5H6.100" stroke="#fff" stroke-width="1" fill="none"/></svg>
<svg class="t" style="left:474.0px;top:253px;" width="1" height="1"><text x="0" y="0" font-size="7.8" fill="#1a1a1a" textLength="48.5" lengthAdjust="spacingAndGlyphs" stroke="#1a1a1a" stroke-width="0.25">Select Linetype</text></svg>
<svg style="position:absolute;left:700.0px;top:244.0px;" width="12" height="12" viewBox="0 0 12 12"><path d="M2.800 2.800L9 9M9 2.800L2.800 9" stroke="#222" stroke-width="1"/></svg>
<svg class="t" style="left:461.0px;top:277px;" width="1" height="1"><text x="0" y="0" font-size="7.2" fill="#222" textLength="49.5" lengthAdjust="spacingAndGlyphs" stroke="#222" stroke-width="0.25">Loaded linetypes</text></svg>
<div style="position:absolute;left:461.6px;top:279.7px;width:247.4px;height:109.3px;background:#fff;box-sizing:border-box;border:1px solid;border-color:#8a8f98 #cfd1d4 #cfd1d4 #8a8f98;"></div>
<div style="position:absolute;left:553.0px;top:281.0px;width:0.8px;height:14.0px;background:#ebebeb;"></div>
<div style="position:absolute;left:613.5px;top:281.0px;width:0.8px;height:14.0px;background:#ebebeb;"></div>
<svg class="t" style="left:466.0px;top:291px;" width="1" height="1"><text x="0" y="0" font-size="7.2" fill="#333" textLength="24.5" lengthAdjust="spacingAndGlyphs" stroke="#333" stroke-width="0.25">Linetype</text></svg>
<svg class="t" style="left:558.3px;top:291px;" width="1" height="1"><text x="0" y="0" font-size="7.2" fill="#333" textLength="35.2" lengthAdjust="spacingAndGlyphs" stroke="#333" stroke-width="0.25">Appearance</text></svg>
<svg class="t" style="left:619.0px;top:291px;" width="1" height="1"><text x="0" y="0" font-size="7.2" fill="#333" textLength="32.5" lengthAdjust="spacingAndGlyphs" stroke="#333" stroke-width="0.25">Description</text></svg>
<div style="position:absolute;left:462.6px;top:295.7px;width:245.4px;height:11.2px;background:#0078d7;"></div>
<div style="position:absolute;left:462.6px;top:295px;width:245.4px;height:72px;overflow:hidden">
<svg class="t" style="left:0.4px;top:9px;" width="1" height="1"><text x="0" y="0" font-size="7.5" fill="#fff" textLength="45.5" lengthAdjust="spacingAndGlyphs" stroke="#fff" stroke-width="0.25">CONTINUOUS</text></svg>
<svg class="t" style="left:153.0px;top:9px;" width="1" height="1"><text x="0" y="0" font-size="7.5" fill="#fff" textLength="29.9" lengthAdjust="spacingAndGlyphs" stroke="#fff" stroke-width="0.25">Solid line</text></svg>
<svg class="t" style="left:0.4px;top:21px;" width="1" height="1"><text x="0" y="0" font-size="7.5" fill="#1e1e1e" textLength="32.5" lengthAdjust="spacingAndGlyphs" stroke="#1e1e1e" stroke-width="0.25">DASHDOT</text></svg>
<svg class="t" style="left:153.0px;top:21px;" width="1" height="1"><text x="0" y="0" font-size="7.5" fill="#1e1e1e" textLength="28.7" lengthAdjust="spacingAndGlyphs" stroke="#1e1e1e" stroke-width="0.25">Dash dot</text></svg>
<svg class="t" style="left:183.7px;top:21px;" width="1" height="1"><text x="0" y="0" font-size="7.5" fill="#1e1e1e" textLength="63.2" lengthAdjust="spacingAndGlyphs" stroke="#1e1e1e" stroke-width="0.25">_ . _ . _ . _ . _ . _</text></svg>
<svg class="t" style="left:0.4px;top:32px;" width="1" height="1"><text x="0" y="0" font-size="7.5" fill="#1e1e1e" textLength="39.5" lengthAdjust="spacingAndGlyphs" stroke="#1e1e1e" stroke-width="0.25">FENCELINE1</text></svg>
<svg class="t" style="left:153.0px;top:32px;" width="1" height="1"><text x="0" y="0" font-size="7.5" fill="#1e1e1e" textLength="49.0" lengthAdjust="spacingAndGlyphs" stroke="#1e1e1e" stroke-width="0.25">Fenceline circle</text></svg>
<svg class="t" style="left:204.4px;top:32px;" width="1" height="1"><text x="0" y="0" font-size="7.5" fill="#1e1e1e" textLength="42.0" lengthAdjust="spacingAndGlyphs" stroke="#1e1e1e" stroke-width="0.25">----0-----0--</text></svg>
<svg class="t" style="left:0.4px;top:44px;" width="1" height="1"><text x="0" y="0" font-size="7.5" fill="#1e1e1e" textLength="30.5" lengthAdjust="spacingAndGlyphs" stroke="#1e1e1e" stroke-width="0.25">GAS_LINE</text></svg>
<svg class="t" style="left:153.0px;top:44px;" width="1" height="1"><text x="0" y="0" font-size="7.5" fill="#1e1e1e" textLength="24.4" lengthAdjust="spacingAndGlyphs" stroke="#1e1e1e" stroke-width="0.25">Gas line</text></svg>
<svg class="t" style="left:179.9px;top:44px;" width="1" height="1"><text x="0" y="0" font-size="7.5" fill="#1e1e1e" textLength="68.5" lengthAdjust="spacingAndGlyphs" stroke="#1e1e1e" stroke-width="0.25">----GAS----GAS----G</text></svg>
<svg class="t" style="left:0.4px;top:56px;" width="1" height="1"><text x="0" y="0" font-size="7.5" fill="#1e1e1e" textLength="26.0" lengthAdjust="spacingAndGlyphs" stroke="#1e1e1e" stroke-width="0.25">HIDDEN</text></svg>
<svg class="t" style="left:153.0px;top:56px;" width="1" height="1"><text x="0" y="0" font-size="7.5" fill="#1e1e1e" textLength="21.9" lengthAdjust="spacingAndGlyphs" stroke="#1e1e1e" stroke-width="0.25">hidden</text></svg>
<svg class="t" style="left:0.4px;top:67px;" width="1" height="1"><text x="0" y="0" font-size="7.5" fill="#1e1e1e" textLength="66.5" lengthAdjust="spacingAndGlyphs" stroke="#1e1e1e" stroke-width="0.25">HOT_WATER_SUPPLY</text></svg>
<svg class="t" style="left:153.0px;top:67px;" width="1" height="1"><text x="0" y="0" font-size="7.5" fill="#1e1e1e" textLength="54.8" lengthAdjust="spacingAndGlyphs" stroke="#1e1e1e" stroke-width="0.25">Hot water supply</text></svg>
<svg class="t" style="left:209.9px;top:67px;" width="1" height="1"><text x="0" y="0" font-size="7.5" fill="#1e1e1e" textLength="35.5" lengthAdjust="spacingAndGlyphs" stroke="#1e1e1e" stroke-width="0.25">---- HW ---</text></svg>
</div>
<svg style="position:absolute;left:556.0px;top:295.0px;" width="58" height="70" viewBox="0 0 58 70">
<path d="M2.500 6.500H55" stroke="#fff" stroke-width="1"/>
<path d="M2.500 18.500H13M24 18.500H35M45 18.500H55" stroke="#333" stroke-width="1"/><path d="M18.500 18.500H19.300M40 18.500H40.800" stroke="#555" stroke-width="1"/>
<path d="M2.500 30.500H7.500M11.500 30.500H38.500M42.500 30.500H55" stroke="#333" stroke-width="1"/><circle cx="9.500" cy="30.500" r="2" fill="#fff" stroke="#333" stroke-width=".9"/><circle cx="40.500" cy="30.500" r="2" fill="#fff" stroke="#333" stroke-width=".9"/>
<path d="M2.500 41.500H13M23 41.500H33.500M44 41.500H54" stroke="#333" stroke-width="1"/><path d="M15.500 40.300V42.700L19 40.300V42.700ZM36 40.300V42.700L39.500 40.300V42.700Z" stroke="#222" stroke-width=".7" fill="#222"/><circle cx="54.500" cy="41.500" r="1" fill="#222"/>
<path d="M2.500 53.500H55" stroke="#333" stroke-width="1" stroke-dasharray="1.800 1.300"/>
<path d="M2.500 64.500H13M23 64.500H33M44 64.500H53" stroke="#333" stroke-width="1"/><path d="M15.500 65Q17 62.800 18.500 65M36 65Q37.500 62.800 39 65" stroke="#222" stroke-width="1" fill="none"/><circle cx="54.500" cy="64.300" r=".8" fill="#222"/>
</svg>
<div style="position:absolute;left:462.6px;top:378.0px;width:245.4px;height:10.0px;background:#f0f0f0;"></div>
<div style="position:absolute;left:473.5px;top:378.0px;width:178.5px;height:10.0px;background:#cdcdcd;"></div>
<svg style="position:absolute;left:462.6px;top:378.0px;" width="246" height="10" viewBox="0 0 246 10"><path d="M6 2.500L3.500 5L6 7.500M239 2.500L241.500 5L239 7.500" stroke="#444" stroke-width="1" fill="none"/></svg>
<div style="position:absolute;left:480.4px;top:394.0px;width:44.5px;height:13.0px;background:#e1e1e1;box-sizing:border-box;border:1.4px solid #0078d7;"></div>
<svg class="t" style="left:497.5px;top:403px;" width="1" height="1"><text x="0" y="0" font-size="7.4" fill="#1a1a1a" textLength="10.5" lengthAdjust="spacingAndGlyphs" stroke="#1a1a1a" stroke-width="0.25">OK</text></svg>
<div style="position:absolute;left:535.2px;top:394.0px;width:44.5px;height:13.0px;background:#e1e1e1;box-sizing:border-box;border:1px solid #b5b5b5;"></div>
<svg class="t" style="left:547.0px;top:403px;" width="1" height="1"><text x="0" y="0" font-size="7.4" fill="#1a1a1a" textLength="21.0" lengthAdjust="spacingAndGlyphs" stroke="#1a1a1a" stroke-width="0.25">Cancel</text></svg>
<div style="position:absolute;left:590.2px;top:394.0px;width:44.8px;height:13.0px;background:#e1e1e1;box-sizing:border-box;border:1px solid #b5b5b5;"></div>
<svg class="t" style="left:603.0px;top:403px;" width="1" height="1"><text x="0" y="0" font-size="7.4" fill="#1a1a1a" textLength="20.5" lengthAdjust="spacingAndGlyphs" stroke="#1a1a1a" stroke-width="0.25">Load...</text></svg>
<svg style="position:absolute;left:620.0px;top:365.0px;" width="240" height="75" viewBox="0 0 240 75"><path d="M19 36L73 11V23.500H220.500V48.500H73V61Z" fill="#fff" stroke="#000" stroke-width="2.600" stroke-linejoin="miter"/></svg>
</div></body></html>
